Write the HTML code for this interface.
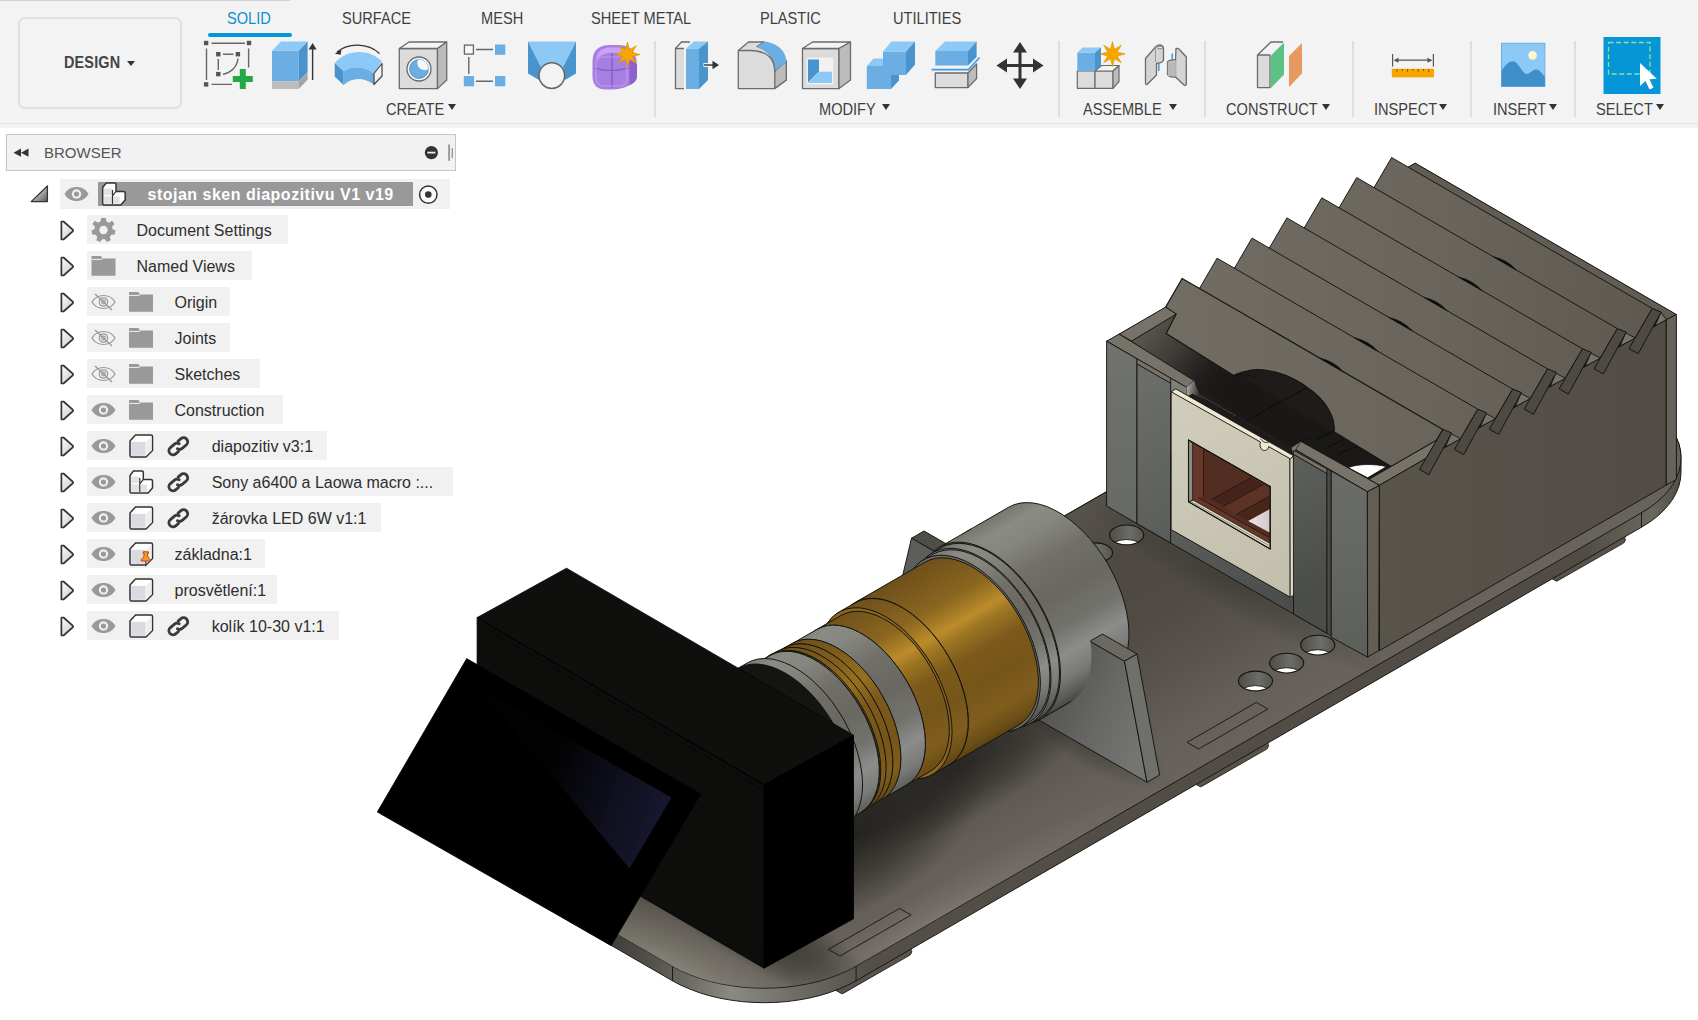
<!DOCTYPE html>
<html lang="cs">
<head>
<meta charset="utf-8">
<title>stojan sken diapozitivu V1 v19</title>
<style>
html,body{margin:0;padding:0;}
body{width:1698px;height:1020px;overflow:hidden;background:#fff;position:relative;font-family:"Liberation Sans",sans-serif;color:#3a3a3a;}
#toolbar{position:absolute;left:0;top:0;width:1698px;height:128px;background:#f3f3f3;}
#toolbar .bline{position:absolute;left:0;top:123px;width:1698px;height:1px;background:#e3e3e3;}
#toolbar .topline{position:absolute;left:0;top:0;width:290px;height:1px;background:#d2d2d2;}
.tab{position:absolute;top:9px;font-size:16.5px;line-height:18px;color:#3e3e3e;white-space:nowrap;transform:scaleX(.885);transform-origin:0 0;}
.tab.act{color:#0a8fd0;}
.uline{position:absolute;left:208px;top:33px;width:84px;height:4px;background:#0696d7;border-radius:2px;}
#design{position:absolute;left:18px;top:17px;width:160px;height:88px;border:2px solid #e0e0e0;border-radius:7px;}
#design span{position:absolute;left:43.5px;top:35px;font-size:16px;line-height:18px;font-weight:bold;color:#444;letter-spacing:0.2px;transform:scaleX(.9);transform-origin:0 0;}
.lbl{position:absolute;top:100px;font-size:16.5px;line-height:18px;color:#3e3e3e;white-space:nowrap;transform:scaleX(.885);transform-origin:0 0;}
.arr{position:absolute;width:0;height:0;border-left:4.5px solid transparent;border-right:4.5px solid transparent;border-top:6px solid #333;}
.sep{position:absolute;top:41px;width:2px;height:76px;background:#dedede;}
#icons{position:absolute;left:0;top:0;}
#browser{position:absolute;left:0;top:128px;width:470px;height:540px;}
#bhead{position:absolute;left:6px;top:6px;width:448px;height:35px;background:#f2f2f2;border:1px solid #c6c6c6;}
#bhead span{position:absolute;left:37px;top:9px;font-size:15px;line-height:18px;color:#555;}
.row{position:absolute;height:30px;background:#f1f1f1;}
.row .t{position:absolute;top:6px;font-size:15px;line-height:18px;color:#2e2e2e;white-space:nowrap;}
.tt{position:absolute;font-size:16px;line-height:18px;color:#2e2e2e;white-space:nowrap;}
#tree{position:absolute;left:0;top:0;}
#model{position:absolute;left:0;top:0;}
</style>
</head>
<body>

<svg id="model" width="1698" height="1020" viewBox="0 0 1698 1020">
<defs>
<linearGradient id="gTop" gradientUnits="userSpaceOnUse" x1="1193.8" y1="771.2" x2="1050.9" y2="523.7"><stop offset="0" stop-color="#68635c"/><stop offset="0.15" stop-color="#645f58"/><stop offset="0.35" stop-color="#58544d"/><stop offset="0.55" stop-color="#4f4b44"/><stop offset="0.8" stop-color="#4e4a43"/><stop offset="1" stop-color="#57534c"/></linearGradient>
<linearGradient id="gSide" gradientUnits="userSpaceOnUse" x1="600" y1="0" x2="1690" y2="0">
<stop offset="0" stop-color="#3a3833"/><stop offset="0.05" stop-color="#55534c"/><stop offset="0.12" stop-color="#8a8a82"/><stop offset="0.19" stop-color="#6a675f"/><stop offset="0.25" stop-color="#534f48"/><stop offset="0.9" stop-color="#504c45"/><stop offset="0.965" stop-color="#6a675f"/><stop offset="1" stop-color="#4a4740"/></linearGradient>
<linearGradient id="gHole" x1="0" y1="0" x2="1" y2="0"><stop offset="0" stop-color="#4d4c47"/><stop offset="0.6" stop-color="#6d6d67"/><stop offset="1" stop-color="#55544f"/></linearGradient>
<radialGradient id="shCam" cx="0.5" cy="0.5" r="0.5"><stop offset="0" stop-color="#1c1b18" stop-opacity="0.85"/><stop offset="0.55" stop-color="#1c1b18" stop-opacity="0.45"/><stop offset="1" stop-color="#1c1b18" stop-opacity="0"/></radialGradient>
<clipPath id="cTop"><polygon points="672.5,966.2 680.8,970.7 689.8,974.6 699.4,978.2 709.4,981.2 719.9,983.7 730.7,985.6 741.7,987.1 752.9,987.9 764.3,988.2 775.6,987.9 786.8,987.1 797.9,985.6 808.7,983.7 819.1,981.2 829.2,978.2 838.7,974.6 847.7,970.7 856.1,966.2 1641.5,512.8 1649.5,507.7 1656.6,502.4 1663.0,496.6 1668.4,490.6 1672.9,484.4 1676.4,477.9 1679.0,471.3 1680.5,464.5 1681.0,457.8 1680.5,451.0 1679.0,444.2 1676.4,437.6 1672.9,431.1 1668.4,424.9 1663.0,418.9 1656.6,413.1 1649.5,407.8 1641.5,402.8 1546.3,347.8 1537.6,343.2 1528.3,339.0 1518.4,335.4 1508.0,332.3 1497.1,329.7 1485.9,327.6 1474.4,326.1 1462.8,325.3 1451.0,325.0 1439.3,325.3 1427.6,326.1 1416.2,327.6 1404.9,329.7 1394.1,332.3 1383.7,335.4 1373.7,339.0 1364.4,343.2 1355.8,347.8 570.3,801.2 562.6,806.1 555.7,811.3 549.6,816.8 544.4,822.6 540.1,828.6 536.7,834.9 534.2,841.2 532.7,847.7 532.3,854.2 532.7,860.8 534.2,867.3 536.7,873.6 540.1,879.9 544.4,885.9 549.6,891.7 555.7,897.2 562.6,902.4 570.3,907.2"/></clipPath>
<radialGradient id="hiL" cx="0.5" cy="0.5" r="0.5"><stop offset="0" stop-color="#b5b2a8" stop-opacity="0.75"/><stop offset="0.5" stop-color="#a09d94" stop-opacity="0.4"/><stop offset="1" stop-color="#a09d94" stop-opacity="0"/></radialGradient>
<linearGradient id="gFin" gradientUnits="userSpaceOnUse" x1="1170" y1="300" x2="1660" y2="330"><stop offset="0" stop-color="#716d64"/><stop offset="0.55" stop-color="#69655c"/><stop offset="1" stop-color="#5d5951"/></linearGradient>
<linearGradient id="gWall" gradientUnits="userSpaceOnUse" x1="1380" y1="480" x2="1670" y2="480"><stop offset="0" stop-color="#58544c"/><stop offset="1" stop-color="#514d46"/></linearGradient>
<linearGradient id="gPilO" gradientUnits="userSpaceOnUse" x1="0" y1="340" x2="0" y2="660"><stop offset="0" stop-color="#70726f"/><stop offset="0.6" stop-color="#676966"/><stop offset="1" stop-color="#5c5e5a"/></linearGradient>
<linearGradient id="gPilI" gradientUnits="userSpaceOnUse" x1="1137" y1="380" x2="1250" y2="620"><stop offset="0" stop-color="#6b6d6a"/><stop offset="0.5" stop-color="#5e605d"/><stop offset="1" stop-color="#4b4d4a"/></linearGradient>
<linearGradient id="gCav" gradientUnits="userSpaceOnUse" x1="1140" y1="325" x2="1222" y2="392"><stop offset="0" stop-color="#5d5a52"/><stop offset="0.45" stop-color="#3b3935"/><stop offset="1" stop-color="#1d1c1a" stop-opacity="0"/></linearGradient>
<linearGradient id="gSlide" gradientUnits="userSpaceOnUse" x1="1175" y1="400" x2="1290" y2="600"><stop offset="0" stop-color="#d0cdba"/><stop offset="1" stop-color="#c1beab"/></linearGradient>
<linearGradient id="gFil" gradientUnits="userSpaceOnUse" x1="1187" y1="390" x2="1200" y2="392"><stop offset="0" stop-color="#a2a29e"/><stop offset="1" stop-color="#2b2a28"/></linearGradient>
<linearGradient id="gPink" gradientUnits="userSpaceOnUse" x1="1248" y1="521" x2="1270" y2="521"><stop offset="0" stop-color="#ece4e4"/><stop offset="1" stop-color="#d3c8ca"/></linearGradient>
<linearGradient id="gGray" gradientUnits="userSpaceOnUse" x1="880.2" y1="581.4" x2="979.8" y2="754.1"><stop offset="0" stop-color="#77766f"/><stop offset="0.08" stop-color="#8b8b86"/><stop offset="0.17" stop-color="#868680"/><stop offset="0.32" stop-color="#716f69"/><stop offset="0.5" stop-color="#696761"/><stop offset="0.66" stop-color="#73736e"/><stop offset="0.78" stop-color="#8c8d8a"/><stop offset="0.88" stop-color="#7a7b78"/><stop offset="0.96" stop-color="#5c5b57"/><stop offset="1" stop-color="#4a4945"/></linearGradient>
<linearGradient id="gGold" gradientUnits="userSpaceOnUse" x1="880.2" y1="581.4" x2="979.8" y2="754.1"><stop offset="0" stop-color="#6b4d1a"/><stop offset="0.12" stop-color="#7a591d"/><stop offset="0.25" stop-color="#8a661f"/><stop offset="0.32" stop-color="#a67b26"/><stop offset="0.375" stop-color="#bb8c2c"/><stop offset="0.44" stop-color="#9c7422"/><stop offset="0.55" stop-color="#7c5a1b"/><stop offset="0.7" stop-color="#76551a"/><stop offset="0.85" stop-color="#7f5e1d"/><stop offset="0.94" stop-color="#6a4d17"/><stop offset="1" stop-color="#4e3810"/></linearGradient>
<linearGradient id="gGoldD" gradientUnits="userSpaceOnUse" x1="880.2" y1="581.4" x2="979.8" y2="754.1"><stop offset="0" stop-color="#6b4d1a"/><stop offset="0.2" stop-color="#7c5b1d"/><stop offset="0.375" stop-color="#94701f"/><stop offset="0.5" stop-color="#7c5a1b"/><stop offset="0.7" stop-color="#76551a"/><stop offset="0.85" stop-color="#7f5e1d"/><stop offset="0.94" stop-color="#6a4d17"/><stop offset="1" stop-color="#4e3810"/></linearGradient>
<linearGradient id="gGus" gradientUnits="userSpaceOnUse" x1="1050" y1="705" x2="1140" y2="745"><stop offset="0" stop-color="#555653"/><stop offset="0.5" stop-color="#676865"/><stop offset="1" stop-color="#747572"/></linearGradient>
<linearGradient id="gScr" gradientUnits="userSpaceOnUse" x1="700" y1="790" x2="560" y2="740"><stop offset="0" stop-color="#1a1a38"/><stop offset="0.5" stop-color="#10101f"/><stop offset="1" stop-color="#020203"/></linearGradient>
</defs>
<polygon points="842.2,969.8 908.9,931.2 908.9,952.2 842.2,990.8 830.1,983.8 830.1,962.8" fill="#58544c" stroke="#58544c" stroke-width="6" stroke-linejoin="round"/>
<polyline points="827.1,962.8 827.9,986.0 842.2,993.8 909.9,955.2 911.9,951.2" fill="none" stroke="#2a2824" stroke-width="0.9" stroke-linejoin="round" stroke-linecap="round" />
<polygon points="1200.7,762.8 1265.7,725.2 1265.7,746.2 1200.7,783.8 1188.6,776.8 1188.6,755.8" fill="#58544c" stroke="#58544c" stroke-width="6" stroke-linejoin="round"/>
<polyline points="1185.6,755.8 1186.4,779.0 1200.7,786.8 1266.7,749.2 1268.7,745.2" fill="none" stroke="#2a2824" stroke-width="0.9" stroke-linejoin="round" stroke-linecap="round" />
<polygon points="1556.7,557.2 1622.5,519.2 1622.5,540.2 1556.7,578.2 1544.6,571.2 1544.6,550.2" fill="#58544c" stroke="#58544c" stroke-width="6" stroke-linejoin="round"/>
<polyline points="1541.6,550.2 1542.4,573.5 1556.7,581.2 1623.5,543.2 1625.5,539.2" fill="none" stroke="#2a2824" stroke-width="0.9" stroke-linejoin="round" stroke-linecap="round" />
<polygon points="532.3,868.8 532.7,875.3 534.2,881.8 536.7,888.1 540.1,894.4 544.4,900.4 549.6,906.2 555.7,911.7 562.6,916.9 570.3,921.8 672.5,980.8 680.8,985.2 689.8,989.1 699.4,992.7 709.4,995.7 719.9,998.2 730.7,1000.1 741.7,1001.6 752.9,1002.4 764.3,1002.7 775.6,1002.4 786.8,1001.6 797.9,1000.1 808.7,998.2 819.1,995.7 829.2,992.7 838.7,989.1 847.7,985.2 856.1,980.8 1641.5,527.2 1649.5,522.2 1656.6,516.9 1663.0,511.1 1668.4,505.1 1672.9,498.9 1676.4,492.4 1679.0,485.8 1680.5,479.0 1681.0,472.2 1681.0,457.8 1680.5,451.0 1679.0,444.2 1676.4,437.6 1672.9,431.1 1668.4,424.9 1663.0,418.9 1656.6,413.1 1649.5,407.8 1641.5,402.8 1546.3,347.8 1537.6,343.2 1528.3,339.0 1518.4,335.4 1508.0,332.3 1497.1,329.7 1485.9,327.6 1474.4,326.1 1462.8,325.3 1451.0,325.0 1439.3,325.3 1427.6,326.1 1416.2,327.6 1404.9,329.7 1394.1,332.3 1383.7,335.4 1373.7,339.0 1364.4,343.2 1355.8,347.8 570.3,801.2 562.6,806.1 555.7,811.3 549.6,816.8 544.4,822.6 540.1,828.6 536.7,834.9 534.2,841.2 532.7,847.7 532.3,854.2" fill="url(#gSide)" stroke="#15140f" stroke-width="0.95" stroke-linejoin="round" />
<polygon points="672.5,966.2 680.8,970.7 689.8,974.6 699.4,978.2 709.4,981.2 719.9,983.7 730.7,985.6 741.7,987.1 752.9,987.9 764.3,988.2 775.6,987.9 786.8,987.1 797.9,985.6 808.7,983.7 819.1,981.2 829.2,978.2 838.7,974.6 847.7,970.7 856.1,966.2 1641.5,512.8 1649.5,507.7 1656.6,502.4 1663.0,496.6 1668.4,490.6 1672.9,484.4 1676.4,477.9 1679.0,471.3 1680.5,464.5 1681.0,457.8 1680.5,451.0 1679.0,444.2 1676.4,437.6 1672.9,431.1 1668.4,424.9 1663.0,418.9 1656.6,413.1 1649.5,407.8 1641.5,402.8 1546.3,347.8 1537.6,343.2 1528.3,339.0 1518.4,335.4 1508.0,332.3 1497.1,329.7 1485.9,327.6 1474.4,326.1 1462.8,325.3 1451.0,325.0 1439.3,325.3 1427.6,326.1 1416.2,327.6 1404.9,329.7 1394.1,332.3 1383.7,335.4 1373.7,339.0 1364.4,343.2 1355.8,347.8 570.3,801.2 562.6,806.1 555.7,811.3 549.6,816.8 544.4,822.6 540.1,828.6 536.7,834.9 534.2,841.2 532.7,847.7 532.3,854.2 532.7,860.8 534.2,867.3 536.7,873.6 540.1,879.9 544.4,885.9 549.6,891.7 555.7,897.2 562.6,902.4 570.3,907.2" fill="url(#gTop)" stroke="#15140f" stroke-width="0.95" stroke-linejoin="round" />
<polyline points="856.1,966.2 856.1,980.8" fill="none" stroke="#15140f" stroke-width="0.9" stroke-linejoin="round" stroke-linecap="round" />
<polyline points="672.5,966.2 672.5,980.8" fill="none" stroke="#15140f" stroke-width="0.9" stroke-linejoin="round" stroke-linecap="round" />
<polyline points="1641.5,512.8 1641.5,527.2" fill="none" stroke="#15140f" stroke-width="0.9" stroke-linejoin="round" stroke-linecap="round" />
<g clip-path="url(#cTop)">
<ellipse cx="660" cy="985" rx="210" ry="80" transform="rotate(28 660 985)" fill="url(#hiL)"/>
<ellipse cx="930" cy="925" rx="260" ry="34" transform="rotate(-30 930 925)" fill="url(#hiL)" opacity="0.35"/>
<ellipse cx="850" cy="835" rx="150" ry="75" transform="rotate(-30 850 835)" fill="url(#shCam)"/>
<ellipse cx="960" cy="765" rx="150" ry="55" transform="rotate(-30 960 765)" fill="url(#shCam)" opacity="0.9"/>
<ellipse cx="760" cy="930" rx="140" ry="38" transform="rotate(30 760 930)" fill="url(#shCam)" opacity="0.7"/>
<ellipse cx="1095" cy="740" rx="80" ry="30" transform="rotate(30 1095 740)" fill="url(#shCam)" opacity="0.45"/>
<ellipse cx="1235" cy="585" rx="190" ry="26" transform="rotate(30 1235 585)" fill="url(#shCam)" opacity="0.3"/>
</g>
<polygon points="840.0,956.0 911.1,915.0 899.5,908.4 828.5,949.4" fill="none" stroke="#15140f" stroke-width="0.9" stroke-linejoin="round" />
<polygon points="1198.6,749.0 1267.9,709.0 1256.3,702.4 1187.1,742.4" fill="none" stroke="#15140f" stroke-width="0.9" stroke-linejoin="round" />
<clipPath id="hc697_54"><ellipse cx="1317.7" cy="645.1" rx="17.1" ry="9.9"/></clipPath>
<ellipse cx="1317.7" cy="645.1" rx="17.1" ry="9.9" fill="url(#gHole)"/>
<ellipse cx="1317.7" cy="659.6" rx="17.1" ry="9.9" fill="#fff" stroke="#15140f" stroke-width="0.9" clip-path="url(#hc697_54)"/>
<ellipse cx="1317.7" cy="645.1" rx="17.1" ry="9.9" fill="none" stroke="#15140f" stroke-width="1.1"/>
<clipPath id="hc661_54"><ellipse cx="1286.6" cy="663.1" rx="17.1" ry="9.9"/></clipPath>
<ellipse cx="1286.6" cy="663.1" rx="17.1" ry="9.9" fill="url(#gHole)"/>
<ellipse cx="1286.6" cy="677.6" rx="17.1" ry="9.9" fill="#fff" stroke="#15140f" stroke-width="0.9" clip-path="url(#hc661_54)"/>
<ellipse cx="1286.6" cy="663.1" rx="17.1" ry="9.9" fill="none" stroke="#15140f" stroke-width="1.1"/>
<clipPath id="hc625_54"><ellipse cx="1255.5" cy="681.0" rx="17.1" ry="9.9"/></clipPath>
<ellipse cx="1255.5" cy="681.0" rx="17.1" ry="9.9" fill="url(#gHole)"/>
<ellipse cx="1255.5" cy="695.5" rx="17.1" ry="9.9" fill="#fff" stroke="#15140f" stroke-width="0.9" clip-path="url(#hc625_54)"/>
<ellipse cx="1255.5" cy="681.0" rx="17.1" ry="9.9" fill="none" stroke="#15140f" stroke-width="1.1"/>
<clipPath id="hc697_275"><ellipse cx="1126.6" cy="534.9" rx="17.1" ry="9.9"/></clipPath>
<ellipse cx="1126.6" cy="534.9" rx="17.1" ry="9.9" fill="url(#gHole)"/>
<ellipse cx="1126.6" cy="549.4" rx="17.1" ry="9.9" fill="#fff" stroke="#15140f" stroke-width="0.9" clip-path="url(#hc697_275)"/>
<ellipse cx="1126.6" cy="534.9" rx="17.1" ry="9.9" fill="none" stroke="#15140f" stroke-width="1.1"/>
<clipPath id="hc661_275"><ellipse cx="1095.5" cy="552.8" rx="17.1" ry="9.9"/></clipPath>
<ellipse cx="1095.5" cy="552.8" rx="17.1" ry="9.9" fill="url(#gHole)"/>
<ellipse cx="1095.5" cy="567.3" rx="17.1" ry="9.9" fill="#fff" stroke="#15140f" stroke-width="0.9" clip-path="url(#hc661_275)"/>
<ellipse cx="1095.5" cy="552.8" rx="17.1" ry="9.9" fill="none" stroke="#15140f" stroke-width="1.1"/>
<polygon points="1106.6,341.2 1367.3,491.7 1379.4,485.3 1676.4,314.5 1415.2,163.1" fill="#1d1c1a" stroke="none" stroke-width="0.95" stroke-linejoin="round" />
<polygon points="1415.2,163.1 1676.4,314.5 1666.3,319.7 1404.8,169.1" fill="#615d55" stroke="#15140f" stroke-width="0.95" stroke-linejoin="round" />
<path d="M1196 384 C1215 392 1222 405 1246 421 L1290 447 L1300 441 L1334 432 L1300 413 L1236 372 L1190 346 Z" fill="#191817"/>
<path d="M1246 421 L1306 388 M1300 441 L1334 432" stroke="#0c0c0b" stroke-width="1" fill="none"/>
<path d="M1300 441 L1369 479.3 L1391.2 466.5 L1334 431.8 Z" fill="#1a1918"/>
<path d="M1316 440 L1340 428 M1328 447 L1350 436 M1338 455 C1350 447 1362 446 1372 446" stroke="#0b0b0a" stroke-width="1" fill="none"/>
<polygon points="1131.7,341.1 1176.2,314.1 1166.2,333.5 1240.0,376.0 1232.0,408.0 1186.0,378.0" fill="url(#gCav)" stroke="none" stroke-width="0.95" stroke-linejoin="round" />
<path d="M1348.2 467.6 C1358 463.8 1374 463.6 1386.5 466.6 L1367.6 477.8 Z" fill="#ffffff" stroke="#15140f" stroke-width="0.8"/>
<polygon points="1391.6,157.5 1652.3,308.5 1628.9,348.6 1368.2,197.6" fill="url(#gFin)" stroke="#15140f" stroke-width="0.95" stroke-linejoin="round" />
<polygon points="1356.7,177.6 1617.4,328.6 1594.0,368.8 1333.3,217.7" fill="url(#gFin)" stroke="#15140f" stroke-width="0.95" stroke-linejoin="round" />
<polygon points="1321.8,197.8 1582.5,348.8 1559.1,388.9 1298.4,237.9" fill="url(#gFin)" stroke="#15140f" stroke-width="0.95" stroke-linejoin="round" />
<polygon points="1286.9,217.9 1547.6,368.9 1524.2,409.1 1263.5,258.1" fill="url(#gFin)" stroke="#15140f" stroke-width="0.95" stroke-linejoin="round" />
<polygon points="1252.0,238.1 1512.7,389.1 1489.3,429.2 1228.6,278.2" fill="url(#gFin)" stroke="#15140f" stroke-width="0.95" stroke-linejoin="round" />
<polygon points="1217.1,258.2 1477.8,409.2 1454.4,449.4 1193.7,298.4" fill="url(#gFin)" stroke="#15140f" stroke-width="0.95" stroke-linejoin="round" />
<path d="M1182.2 278.4 L1442.9 429.4 L1426 458.4 L1437.6 439.7 L1391.2 466.5 L1334 431.8 C1336 418 1326 400 1308 388 C1290 374 1262 366 1247 371 C1240 372.5 1236 374 1233.7 375.5 L1166.2 333.5 L1176.2 314.1 L1165.6 307.1 Z" fill="url(#gFin)" stroke="#15140f" stroke-width="1.1" stroke-linejoin="round"/>
<path d="M1234 375.5 C1244 372 1250 376 1256 378" stroke="#15140f" stroke-width="1" fill="none"/>
<path d="M1319.8 358.1 Q1333.7 361.1 1343.2 371.7 Z" fill="#0d0d0c" stroke="#0d0d0c" stroke-width="0.6"/>
<path d="M1354.5 337.8 Q1368.4 340.8 1377.9 351.4 Z" fill="#0d0d0c" stroke="#0d0d0c" stroke-width="0.6"/>
<path d="M1389.2 317.5 Q1403.1 320.5 1412.6 331.1 Z" fill="#0d0d0c" stroke="#0d0d0c" stroke-width="0.6"/>
<path d="M1423.9 297.3 Q1437.8 300.3 1447.3 310.9 Z" fill="#0d0d0c" stroke="#0d0d0c" stroke-width="0.6"/>
<path d="M1458.6 277.0 Q1472.5 280.0 1482.0 290.6 Z" fill="#0d0d0c" stroke="#0d0d0c" stroke-width="0.6"/>
<path d="M1493.3 256.7 Q1507.2 259.7 1516.7 270.3 Z" fill="#0d0d0c" stroke="#0d0d0c" stroke-width="0.6"/>
<polygon points="1379.4,485.3 1369.0,479.3 1437.6,439.7 1426.0,458.4" fill="#77736a" stroke="#15140f" stroke-width="0.95" stroke-linejoin="round" />
<polygon points="1379.4,485.3 1666.3,319.7 1666.3,485.1 1379.4,650.7" fill="url(#gWall)" stroke="#15140f" stroke-width="0.95" stroke-linejoin="round" />
<polygon points="1661.0,312.0 1661.0,312.5 1666.3,319.7 1655.0,326.0" fill="#77736a" stroke="#15140f" stroke-width="0.9" stroke-linejoin="round" />
<polygon points="1367.3,491.7 1379.4,485.3 1378.8,650.6 1367.6,657.1" fill="#625e56" stroke="#15140f" stroke-width="0.95" stroke-linejoin="round" />
<polygon points="1666.3,319.7 1676.4,314.5 1676.4,479.4 1666.3,485.1" fill="#67635b" stroke="#15140f" stroke-width="0.95" stroke-linejoin="round" />
<polygon points="1451.1,433.7 1460.7,438.8 1445.6,446.9" fill="#77736a" stroke="#15140f" stroke-width="0.9" stroke-linejoin="round" />
<polygon points="1442.9,429.4 1451.7,432.9 1428.8,474.7 1419.5,469.5" fill="#4e4a43" stroke="#15140f" stroke-width="1.0" stroke-linejoin="round" />
<polygon points="1486.0,413.6 1495.6,418.6 1480.5,426.8" fill="#77736a" stroke="#15140f" stroke-width="0.9" stroke-linejoin="round" />
<polygon points="1477.8,409.2 1486.6,412.8 1463.7,454.6 1454.4,449.4" fill="#4e4a43" stroke="#15140f" stroke-width="1.0" stroke-linejoin="round" />
<polygon points="1520.9,393.4 1530.5,398.5 1515.4,406.6" fill="#77736a" stroke="#15140f" stroke-width="0.9" stroke-linejoin="round" />
<polygon points="1512.7,389.1 1521.5,392.6 1498.6,434.4 1489.3,429.2" fill="#4e4a43" stroke="#15140f" stroke-width="1.0" stroke-linejoin="round" />
<polygon points="1555.8,373.2 1565.4,378.3 1550.3,386.4" fill="#77736a" stroke="#15140f" stroke-width="0.9" stroke-linejoin="round" />
<polygon points="1547.6,368.9 1556.4,372.4 1533.5,414.2 1524.2,409.1" fill="#4e4a43" stroke="#15140f" stroke-width="1.0" stroke-linejoin="round" />
<polygon points="1590.7,353.1 1600.3,358.2 1585.2,366.3" fill="#77736a" stroke="#15140f" stroke-width="0.9" stroke-linejoin="round" />
<polygon points="1582.5,348.8 1591.3,352.3 1568.4,394.1 1559.1,388.9" fill="#4e4a43" stroke="#15140f" stroke-width="1.0" stroke-linejoin="round" />
<polygon points="1625.6,332.9 1635.2,338.0 1620.1,346.1" fill="#77736a" stroke="#15140f" stroke-width="0.9" stroke-linejoin="round" />
<polygon points="1617.4,328.6 1626.2,332.1 1603.3,373.9 1594.0,368.8" fill="#4e4a43" stroke="#15140f" stroke-width="1.0" stroke-linejoin="round" />
<polygon points="1652.3,308.5 1661.1,312.0 1638.2,353.8 1628.9,348.6" fill="#4e4a43" stroke="#15140f" stroke-width="1.0" stroke-linejoin="round" />
<polygon points="1106.6,341.2 1119.3,334.0 1194.1,380.6 1186.5,387.3" fill="#77736a" stroke="#15140f" stroke-width="0.95" stroke-linejoin="round" />
<polygon points="1119.3,334.0 1165.6,307.1 1176.2,314.1 1131.7,341.1" fill="#77736a" stroke="#15140f" stroke-width="0.95" stroke-linejoin="round" />
<polygon points="1186.5,387.3 1194.1,380.6 1192.0,392.0 1185.0,396.0" fill="#8a8a84" stroke="#15140f" stroke-width="0.8" stroke-linejoin="round" />
<polygon points="1291.2,447.0 1300.6,441.2 1379.4,485.3 1367.3,491.7" fill="#77736a" stroke="#15140f" stroke-width="0.95" stroke-linejoin="round" />
<polygon points="1106.6,341.2 1137.0,358.8 1137.0,523.6 1106.6,506.0" fill="url(#gPilO)" stroke="#15140f" stroke-width="0.95" stroke-linejoin="round" />
<polygon points="1170.6,525.0 1293.5,596.0 1293.5,613.9 1170.6,543.0" fill="url(#gPilI)" stroke="none" stroke-width="0.95" stroke-linejoin="round" />
<polyline points="1137.0,523.6 1327.0,633.3" fill="none" stroke="#15140f" stroke-width="0.95" stroke-linejoin="round" stroke-linecap="round" />
<polygon points="1137.0,363.8 1170.6,383.2 1170.6,543.0 1137.0,523.6" fill="url(#gPilI)" stroke="#15140f" stroke-width="0.95" stroke-linejoin="round" />
<polygon points="1293.5,454.2 1327.0,473.5 1327.0,633.3 1293.5,613.9" fill="url(#gPilI)" stroke="#15140f" stroke-width="0.95" stroke-linejoin="round" />
<polygon points="1186.5,387.3 1291.2,447.8 1293.4,457.0 1175.6,389.5" fill="#1d1c1a" stroke="none" stroke-width="0.95" stroke-linejoin="round" />
<polygon points="1170.6,378.2 1186.5,387.3 1186.5,397.0 1176.0,391.0 1170.6,392.0" fill="#7d7f7c" stroke="#15140f" stroke-width="0.8" stroke-linejoin="round" />
<path d="M1186.5 387.3 L1194.1 380.6 C1196 388 1199 394 1204 400 L1192.5 393.5 L1186.5 397 Z" fill="url(#gFil)"/>
<path d="M1291.2 447.8 L1293.4 446.4 L1300.6 441.2 L1296 449 L1293.4 456 Z" fill="#7d7f7c" stroke="#15140f" stroke-width="0.7"/>
<polygon points="1137.0,358.8 1170.6,378.2 1170.6,383.2 1137.0,363.8" fill="#77736a" stroke="#15140f" stroke-width="0.8" stroke-linejoin="round" />
<polygon points="1293.5,450.3 1327.0,469.1 1327.0,473.5 1293.5,454.2" fill="#77736a" stroke="#15140f" stroke-width="0.8" stroke-linejoin="round" />
<polygon points="1327.0,468.5 1331.2,470.9 1331.2,635.7 1327.0,633.3" fill="#4a4b48" stroke="#15140f" stroke-width="0.8" stroke-linejoin="round" />
<polygon points="1331.2,470.9 1367.3,491.7 1367.6,657.1 1331.2,637.2" fill="url(#gPilO)" stroke="#15140f" stroke-width="0.95" stroke-linejoin="round" />
<polygon points="1171.2,391.2 1290.0,458.2 1290.2,597.2 1171.1,529.6" fill="url(#gSlide)" stroke="#15140f" stroke-width="0.95" stroke-linejoin="round" />
<polygon points="1290.0,458.2 1293.3,456.6 1293.5,595.2 1290.2,597.2" fill="#dedac6" stroke="#15140f" stroke-width="0.8" stroke-linejoin="round" />
<path d="M1171.2 391.8 L1175.8 388.9 L1293.3 455.6 L1290.6 459 L1268.6 446.6 C1268.4 449.6 1265.4 451.4 1262.6 450 C1260 448.6 1259.6 445 1260.4 442 Z" fill="#ece8d4" stroke="#15140f" stroke-width="0.9" stroke-linejoin="round"/>
<path d="M1260.6 438.6 C1262 441.5 1265.5 443.4 1268.8 442.2" fill="none" stroke="#15140f" stroke-width="0.8"/>
<polygon points="1188.5,439.9 1270.2,486.6 1270.2,549.0 1188.5,501.7" fill="#522d22" stroke="#15140f" stroke-width="0.95" stroke-linejoin="round" />
<polygon points="1192.6,443.3 1203.6,449.6 1203.6,497.0 1192.6,500.3" fill="#65382a" stroke="none" stroke-width="0.95" stroke-linejoin="round" />
<polyline points="1203.6,449.6 1203.6,497.0" fill="none" stroke="#2e150e" stroke-width="0.9" stroke-linejoin="round" stroke-linecap="round" />
<polygon points="1211.2,499.6 1251.0,477.7 1263.4,484.5 1223.5,506.5" fill="#44241a" stroke="none" stroke-width="0.95" stroke-linejoin="round" />
<polygon points="1223.5,506.5 1263.4,484.5 1269.5,488.0 1269.5,496.2 1235.9,514.7" fill="#5c3327" stroke="none" stroke-width="0.95" stroke-linejoin="round" />
<polygon points="1235.9,514.7 1269.5,496.2 1269.5,509.2 1248.2,520.9" fill="#472619" stroke="none" stroke-width="0.95" stroke-linejoin="round" />
<polygon points="1193.3,500.3 1198.0,497.5 1269.5,537.8 1269.5,543.2" fill="#643729" stroke="none" stroke-width="0.95" stroke-linejoin="round" />
<path d="M1211.2 499.6 L1251 477.7 M1223.5 506.5 L1263.4 484.5 M1235.9 514.7 L1269.5 496.2 M1198 497.5 L1269.5 537.8" stroke="#2e150e" stroke-width="0.9" fill="none"/>
<polygon points="1248.2,520.9 1269.5,509.2 1269.5,532.6" fill="url(#gPink)" stroke="none" stroke-width="0.95" stroke-linejoin="round" />
<polygon points="1188.5,439.9 1192.6,443.3 1192.6,500.3 1188.5,501.7" fill="#8c8c84" stroke="#15140f" stroke-width="0.7" stroke-linejoin="round" />
<polygon points="1188.5,501.7 1193.3,500.3 1270.2,543.5 1270.2,549.0" fill="#dedbc8" stroke="#15140f" stroke-width="0.7" stroke-linejoin="round" />
<polyline points="1190.5,501.2 1270.2,546.2" fill="none" stroke="#55534a" stroke-width="0.6" stroke-linejoin="round" stroke-linecap="round" />
<polygon points="1188.5,439.9 1270.2,486.6 1270.2,549.0 1188.5,501.7" fill="none" stroke="#15140f" stroke-width="1.1" stroke-linejoin="round" />
<polygon points="911.5,538.2 924.0,531.0 958.7,551.0 946.1,558.2" fill="#4f4d48" stroke="#15140f" stroke-width="0.95" stroke-linejoin="round" />
<polygon points="911.5,538.2 946.1,558.2 946.1,606.2 901.1,620.2 889.0,633.2" fill="#5d5e5b" stroke="#15140f" stroke-width="0.95" stroke-linejoin="round" />
<polygon points="968.2,530.6 963.2,534.1 958.9,538.5 955.2,543.7 952.2,549.8 949.9,556.6 948.4,564.0 947.6,572.0 947.6,580.6 948.4,589.5 949.9,598.7 952.2,608.1 955.2,617.6 958.9,627.1 963.2,636.5 968.2,645.7 973.6,654.6 979.6,663.1 986.0,671.0 992.7,678.4 999.8,685.0 1007.0,691.0 1014.3,696.1 1021.7,700.4 1029.0,703.7 1036.3,706.1 1043.3,707.5 1050.0,708.0 1056.4,707.4 1062.4,705.8 1067.9,703.3 1108.3,679.9 1113.3,676.4 1117.6,672.0 1121.3,666.8 1124.3,660.7 1126.6,654.0 1128.1,646.5 1128.9,638.5 1128.9,630.0 1128.1,621.0 1126.6,611.8 1124.3,602.4 1121.3,592.9 1117.6,583.4 1113.3,574.0 1108.3,564.8 1102.9,555.9 1096.9,547.5 1090.5,539.5 1083.8,532.2 1076.7,525.5 1069.5,519.5 1062.2,514.4 1054.8,510.2 1047.5,506.8 1040.3,504.4 1033.2,503.0 1026.5,502.6 1020.1,503.1 1014.1,504.7 1008.7,507.2" fill="url(#gGray)" stroke="#15140f" stroke-width="1.0" stroke-linejoin="round" />
<polygon points="1089.9,641.2 1124.5,661.2 1147.0,782.2 1040.5,721.0 1038.5,720.0 1067.9,703.3 1071.0,701.2 1073.9,698.8 1076.6,696.1 1079.0,693.0 1081.1,689.6 1083.0,685.9 1084.7,681.9 1086.0,677.7 1087.1,673.2 1087.8,668.4 1088.3,663.4 1088.5,658.3 1088.4,652.9 1088.0,647.4" fill="url(#gGus)" stroke="#15140f" stroke-width="0.95" stroke-linejoin="round" />
<polygon points="1089.9,641.2 1102.4,634.0 1137.1,654.0 1124.5,661.2" fill="#6b6962" stroke="#15140f" stroke-width="0.95" stroke-linejoin="round" />
<polygon points="1124.5,661.2 1137.1,654.0 1159.6,775.0 1147.0,782.2" fill="#6f706c" stroke="#15140f" stroke-width="0.95" stroke-linejoin="round" />
<polygon points="940.2,546.8 935.2,550.3 930.9,554.7 927.2,559.9 924.2,566.0 921.9,572.7 920.4,580.2 919.6,588.2 919.6,596.7 920.4,605.7 921.9,614.9 924.2,624.3 927.2,633.8 930.9,643.3 935.2,652.7 940.2,661.9 945.6,670.8 951.6,679.2 958.0,687.2 964.7,694.5 971.8,701.2 979.0,707.2 986.3,712.3 993.7,716.5 1001.0,719.9 1008.2,722.3 1015.3,723.7 1022.0,724.1 1028.4,723.6 1034.4,722.0 1039.8,719.5 1070.9,701.6 1075.8,698.1 1080.1,693.7 1083.8,688.4 1086.8,682.4 1089.1,675.6 1090.6,668.2 1091.4,660.1 1091.4,651.6 1090.6,642.7 1089.1,633.5 1086.8,624.0 1083.8,614.5 1080.1,605.0 1075.8,595.6 1070.9,586.4 1065.4,577.6 1059.4,569.1 1053.0,561.2 1046.3,553.8 1039.3,547.1 1032.0,541.2 1024.7,536.1 1017.3,531.8 1010.0,528.5 1002.8,526.1 995.7,524.6 989.0,524.2 982.6,524.8 976.6,526.3 971.2,528.9" fill="url(#gGray)" stroke="none" stroke-width="0.95" stroke-linejoin="round" />
<polyline points="971.2,528.9 940.2,546.8 935.2,550.3 930.9,554.7 927.2,559.9 924.2,566.0 921.9,572.7 920.4,580.2 919.6,588.2 919.6,596.7 920.4,605.7 921.9,614.9 924.2,624.3 927.2,633.8 930.9,643.3 935.2,652.7 940.2,661.9 945.6,670.8 951.6,679.2 958.0,687.2 964.7,694.5 971.8,701.2 979.0,707.2 986.3,712.3 993.7,716.5 1001.0,719.9 1008.2,722.3 1015.3,723.7 1022.0,724.1 1028.4,723.6 1034.4,722.0 1039.8,719.5 1070.9,701.6" fill="none" stroke="#15140f" stroke-width="1.0" stroke-linejoin="round" stroke-linecap="round" />
<polygon points="919.5,592.4 919.9,584.1 921.0,576.4 923.0,569.3 925.6,562.8 928.9,557.2 933.0,552.3 937.6,548.4 942.8,545.4 948.6,543.3 954.8,542.3 961.3,542.2 968.2,543.1 975.3,545.0 982.6,547.9 990.0,551.7 997.4,556.4 1004.7,562.0 1011.8,568.3 1018.7,575.3 1025.2,583.0 1031.4,591.2 1037.2,599.9 1042.4,608.9 1047.0,618.2 1051.0,627.7 1054.4,637.2 1057.0,646.7 1059.0,656.0 1060.1,665.1 1060.5,673.8 1060.1,682.1 1059.0,689.9 1057.0,697.0 1054.4,703.4 1051.0,709.1 1047.0,713.9 1042.4,717.8 1037.2,720.8 1031.4,722.9 1025.2,724.0 1018.7,724.0 1011.8,723.1 1004.7,721.2 997.4,718.3 990.0,714.5 982.6,709.8 975.3,704.3 968.2,698.0 961.3,690.9 954.8,683.3 948.6,675.1 942.8,666.4 937.6,657.3 933.0,648.0 929.0,638.6 925.6,629.0 923.0,619.6 921.0,610.2 919.9,601.2 919.5,592.4" fill="#5a5955" stroke="#15140f" stroke-width="1.0" stroke-linejoin="round" />
<polygon points="932.3,552.9 927.5,556.3 923.2,560.6 919.5,565.8 916.6,571.8 914.3,578.5 912.8,585.8 912.1,593.7 912.1,602.1 912.8,610.9 914.3,620.0 916.6,629.3 919.5,638.7 923.2,648.1 927.5,657.4 932.3,666.4 937.7,675.2 943.6,683.5 949.9,691.3 956.6,698.6 963.5,705.2 970.6,711.1 977.9,716.1 985.1,720.3 992.4,723.6 999.5,726.0 1006.4,727.4 1013.1,727.8 1019.4,727.2 1025.3,725.7 1030.7,723.2 1039.2,718.3 1044.0,714.9 1048.3,710.5 1052.0,705.4 1054.9,699.4 1057.2,692.7 1058.7,685.3 1059.4,677.4 1059.4,669.0 1058.7,660.2 1057.2,651.1 1054.9,641.8 1052.0,632.4 1048.3,623.1 1044.0,613.8 1039.2,604.7 1033.8,596.0 1027.9,587.6 1021.6,579.8 1014.9,572.5 1008.0,565.9 1000.9,560.1 993.6,555.0 986.4,550.8 979.1,547.5 972.0,545.2 965.1,543.8 958.4,543.3 952.1,543.9 946.2,545.4 940.8,548.0" fill="url(#gGray)" stroke="#15140f" stroke-width="1.0" stroke-linejoin="round" />
<polygon points="912.0,597.9 912.3,589.7 913.5,582.1 915.4,575.0 918.0,568.7 921.3,563.1 925.2,558.3 929.8,554.5 935.0,551.5 940.6,549.5 946.7,548.4 953.2,548.3 960.0,549.3 967.0,551.1 974.2,554.0 981.5,557.7 988.8,562.4 996.0,567.8 1003.0,574.1 1009.8,581.0 1016.3,588.6 1022.4,596.7 1028.0,605.2 1033.2,614.1 1037.8,623.3 1041.7,632.6 1045.0,642.0 1047.6,651.4 1049.5,660.6 1050.7,669.6 1051.0,678.2 1050.7,686.4 1049.5,694.0 1047.6,701.0 1045.0,707.4 1041.7,712.9 1037.8,717.7 1033.2,721.6 1028.0,724.6 1022.4,726.6 1016.3,727.6 1009.8,727.7 1003.0,726.8 996.0,724.9 988.8,722.1 981.5,718.3 974.2,713.7 967.0,708.2 960.0,702.0 953.2,695.1 946.7,687.5 940.6,679.4 935.0,670.8 929.8,661.9 925.2,652.7 921.3,643.4 918.0,634.0 915.4,624.7 913.5,615.5 912.3,606.5 912.0,597.9" fill="#7a7a76" stroke="#15140f" stroke-width="1.0" stroke-linejoin="round" />
<polygon points="923.6,559.7 918.8,563.1 914.6,567.4 911.0,572.5 908.1,578.3 905.9,584.9 904.4,592.1 903.7,599.9 903.7,608.2 904.4,616.9 905.9,625.8 908.1,634.9 911.0,644.2 914.6,653.4 918.8,662.5 923.6,671.4 928.9,680.0 934.7,688.3 940.9,696.0 947.5,703.1 954.3,709.6 961.3,715.4 968.4,720.3 975.6,724.5 982.7,727.7 989.7,730.0 996.5,731.4 1003.1,731.8 1009.3,731.3 1015.1,729.8 1020.4,727.3 1029.9,721.8 1034.7,718.4 1038.9,714.2 1042.5,709.1 1045.4,703.2 1047.6,696.6 1049.1,689.4 1049.8,681.6 1049.8,673.3 1049.1,664.7 1047.6,655.7 1045.4,646.6 1042.5,637.4 1038.9,628.1 1034.7,619.0 1029.9,610.1 1024.6,601.5 1018.8,593.3 1012.6,585.6 1006.0,578.4 999.2,571.9 992.2,566.2 985.1,561.2 977.9,557.1 970.8,553.8 963.8,551.5 957.0,550.1 950.4,549.7 944.2,550.3 938.4,551.8 933.1,554.2" fill="url(#gGray)" stroke="#15140f" stroke-width="1.0" stroke-linejoin="round" />
<polygon points="903.6,604.0 904.0,596.0 905.1,588.5 906.9,581.5 909.5,575.3 912.8,569.8 916.7,565.1 921.2,561.3 926.2,558.4 931.8,556.4 937.8,555.3 944.2,555.3 950.9,556.2 957.8,558.0 964.8,560.8 972.0,564.5 979.2,569.1 986.2,574.5 993.1,580.6 999.8,587.4 1006.2,594.8 1012.2,602.8 1017.8,611.2 1022.8,620.0 1027.3,629.0 1031.2,638.2 1034.5,647.5 1037.1,656.7 1038.9,665.7 1040.0,674.5 1040.4,683.0 1040.0,691.1 1038.9,698.6 1037.1,705.5 1034.5,711.7 1031.2,717.2 1027.3,721.9 1022.8,725.7 1017.8,728.7 1012.2,730.6 1006.2,731.7 999.8,731.7 993.1,730.9 986.2,729.0 979.2,726.2 972.0,722.5 964.8,718.0 957.8,712.6 950.9,706.4 944.2,699.6 937.8,692.2 931.8,684.2 926.2,675.8 921.2,667.0 916.7,658.0 912.8,648.8 909.5,639.6 906.9,630.4 905.1,621.3 904.0,612.5 903.6,604.0" fill="#6a6964" stroke="#15140f" stroke-width="1.0" stroke-linejoin="round" />
<polygon points="854.9,602.6 850.3,605.9 846.2,610.0 842.7,615.0 839.9,620.7 837.7,627.1 836.3,634.1 835.6,641.7 835.6,649.7 836.3,658.1 837.7,666.8 839.9,675.7 842.7,684.6 846.2,693.6 850.3,702.5 854.9,711.1 860.1,719.5 865.7,727.4 871.7,734.9 878.1,741.8 884.7,748.1 891.5,753.7 898.4,758.6 905.4,762.6 912.3,765.7 919.1,768.0 925.7,769.3 932.1,769.7 938.1,769.2 943.7,767.7 948.9,765.3 1019.0,724.9 1023.6,721.6 1027.7,717.5 1031.2,712.5 1034.0,706.8 1036.2,700.4 1037.6,693.4 1038.3,685.8 1038.3,677.8 1037.6,669.4 1036.2,660.7 1034.0,651.8 1031.2,642.9 1027.7,633.9 1023.6,625.0 1019.0,616.4 1013.8,608.0 1008.2,600.1 1002.2,592.6 995.8,585.7 989.2,579.4 982.4,573.8 975.5,568.9 968.5,564.9 961.6,561.8 954.8,559.5 948.2,558.2 941.8,557.8 935.8,558.3 930.2,559.8 925.0,562.2" fill="url(#gGold)" stroke="#15140f" stroke-width="1.0" stroke-linejoin="round" />
<polygon points="835.5,645.6 835.8,637.8 836.9,630.5 838.7,623.8 841.2,617.8 844.4,612.4 848.2,607.9 852.5,604.2 857.5,601.3 862.9,599.4 868.7,598.4 874.9,598.3 881.4,599.2 888.1,601.0 895.0,603.7 901.9,607.3 908.8,611.7 915.7,616.9 922.4,622.9 928.9,629.5 935.1,636.7 940.9,644.5 946.3,652.6 951.3,661.2 955.6,669.9 959.4,678.8 962.6,687.8 965.1,696.8 966.9,705.6 968.0,714.1 968.3,722.3 968.0,730.1 966.9,737.4 965.1,744.2 962.6,750.2 959.4,755.5 955.6,760.1 951.3,763.8 946.3,766.6 940.9,768.6 935.1,769.6 928.9,769.7 922.4,768.8 915.7,767.0 908.8,764.3 901.9,760.7 895.0,756.3 888.1,751.0 881.4,745.1 874.9,738.5 868.7,731.2 862.9,723.5 857.5,715.3 852.5,706.8 848.2,698.0 844.4,689.1 841.2,680.1 838.7,671.2 836.9,662.4 835.8,653.9 835.5,645.6" fill="#5a4216" stroke="#15140f" stroke-width="1.0" stroke-linejoin="round" />
<polygon points="839.0,612.1 834.3,615.4 830.2,619.5 826.8,624.5 823.9,630.2 821.8,636.5 820.4,643.5 819.6,651.1 819.6,659.1 820.4,667.5 821.8,676.1 823.9,685.0 826.8,693.9 830.2,702.9 834.3,711.7 839.0,720.3 844.1,728.7 849.7,736.6 855.7,744.1 862.1,751.0 868.7,757.3 875.4,762.9 882.3,767.7 889.3,771.7 896.2,774.8 902.9,777.1 909.5,778.4 915.9,778.8 921.9,778.3 927.5,776.8 932.6,774.4 948.7,765.1 953.4,761.9 957.5,757.7 960.9,752.8 963.8,747.1 965.9,740.7 967.3,733.7 968.1,726.2 968.1,718.2 967.3,709.8 965.9,701.1 963.8,692.3 960.9,683.3 957.5,674.4 953.4,665.6 948.7,656.9 943.6,648.6 938.0,640.7 932.0,633.2 925.6,626.3 919.0,620.0 912.3,614.4 905.4,609.6 898.4,605.6 891.5,602.4 884.8,600.2 878.2,598.9 871.8,598.5 865.8,599.0 860.2,600.5 855.1,602.8" fill="url(#gGold)" stroke="#15140f" stroke-width="1.0" stroke-linejoin="round" />
<polygon points="819.5,655.0 819.9,647.2 821.0,640.0 822.8,633.3 825.3,627.2 828.4,621.9 832.2,617.4 836.6,613.7 841.5,610.8 846.9,608.9 852.7,607.9 858.9,607.8 865.3,608.7 872.0,610.5 878.9,613.2 885.8,616.8 892.7,621.2 899.6,626.4 906.3,632.3 912.7,639.0 918.9,646.2 924.7,653.9 930.1,662.0 935.0,670.5 939.4,679.3 943.2,688.2 946.3,697.1 948.8,706.0 950.6,714.8 951.7,723.3 952.1,731.5 951.7,739.3 950.6,746.6 948.8,753.3 946.3,759.3 943.2,764.7 939.4,769.2 935.0,772.9 930.1,775.7 924.7,777.7 918.9,778.7 912.7,778.7 906.3,777.9 899.6,776.1 892.7,773.4 885.8,769.8 878.9,765.4 872.0,760.2 865.3,754.2 858.9,747.6 852.7,740.4 846.9,732.7 841.5,724.5 836.6,716.0 832.2,707.3 828.4,698.4 825.3,689.5 822.8,680.5 821.0,671.8 819.9,663.2 819.5,655.0" fill="#8a651e" stroke="#15140f" stroke-width="1.0" stroke-linejoin="round" />
<polygon points="817.0,629.3 812.6,632.5 808.7,636.4 805.3,641.1 802.6,646.6 800.6,652.7 799.2,659.4 798.5,666.6 798.5,674.3 799.2,682.3 800.6,690.7 802.6,699.1 805.3,707.7 808.7,716.3 812.6,724.7 817.0,733.0 822.0,741.0 827.3,748.6 833.1,755.8 839.2,762.4 845.5,768.4 852.0,773.7 858.6,778.4 865.2,782.2 871.8,785.2 878.3,787.4 884.6,788.6 890.7,789.0 896.5,788.5 901.8,787.1 906.8,784.8 930.7,771.0 935.1,767.9 939.0,763.9 942.4,759.2 945.1,753.8 947.1,747.7 948.5,740.9 949.2,733.7 949.2,726.0 948.5,718.0 947.1,709.7 945.1,701.2 942.4,692.7 939.0,684.1 935.1,675.6 930.7,667.4 925.7,659.4 920.4,651.8 914.6,644.6 908.5,638.0 902.2,632.0 895.7,626.6 889.1,622.0 882.5,618.2 875.9,615.2 869.4,613.0 863.1,611.7 857.0,611.3 851.2,611.8 845.9,613.3 840.9,615.5" fill="url(#gGold)" stroke="#15140f" stroke-width="1.0" stroke-linejoin="round" />
<polygon points="798.4,670.4 798.8,663.0 799.8,656.0 801.5,649.6 803.9,643.8 806.9,638.7 810.5,634.3 814.7,630.8 819.4,628.1 824.6,626.2 830.2,625.3 836.1,625.2 842.3,626.0 848.7,627.8 855.3,630.4 861.9,633.8 868.5,638.0 875.1,643.0 881.5,648.7 887.7,655.0 893.6,661.9 899.2,669.3 904.4,677.1 909.1,685.3 913.3,693.6 916.9,702.2 919.9,710.7 922.3,719.3 924.0,727.7 925.0,735.9 925.4,743.7 925.0,751.2 924.0,758.2 922.3,764.6 919.9,770.4 916.9,775.5 913.3,779.8 909.1,783.4 904.4,786.1 899.2,787.9 893.6,788.9 887.7,788.9 881.5,788.1 875.1,786.4 868.5,783.8 861.9,780.4 855.3,776.1 848.7,771.2 842.3,765.5 836.1,759.1 830.2,752.2 824.6,744.8 819.4,737.0 814.7,728.9 810.5,720.5 806.9,712.0 803.9,703.4 801.5,694.9 799.8,686.5 798.8,678.3 798.4,670.4" fill="#5a4216" stroke="#15140f" stroke-width="1.0" stroke-linejoin="round" />
<polygon points="792.3,643.6 787.9,646.7 784.0,650.7 780.6,655.4 777.9,660.9 775.9,667.0 774.5,673.7 773.8,680.9 773.8,688.6 774.5,696.6 775.9,704.9 777.9,713.4 780.6,722.0 784.0,730.5 787.9,739.0 792.3,747.3 797.3,755.2 802.6,762.9 808.4,770.0 814.5,776.6 820.8,782.7 827.3,788.0 833.9,792.6 840.5,796.5 847.1,799.5 853.6,801.6 859.9,802.9 866.0,803.3 871.8,802.8 877.1,801.4 882.1,799.1 906.8,784.8 911.2,781.7 915.1,777.7 918.5,773.0 921.2,767.6 923.2,761.5 924.6,754.7 925.3,747.5 925.3,739.8 924.6,731.8 923.2,723.5 921.2,715.0 918.5,706.5 915.1,697.9 911.2,689.4 906.8,681.2 901.8,673.2 896.5,665.6 890.7,658.4 884.6,651.8 878.3,645.8 871.8,640.4 865.2,635.8 858.6,632.0 852.0,628.9 845.5,626.8 839.2,625.5 833.1,625.1 827.3,625.6 822.0,627.1 817.0,629.3" fill="url(#gGray)" stroke="#15140f" stroke-width="1.0" stroke-linejoin="round" />
<polygon points="773.7,684.7 774.1,677.2 775.1,670.3 776.8,663.8 779.2,658.0 782.2,653.0 785.8,648.6 790.0,645.1 794.7,642.3 799.9,640.5 805.5,639.5 811.4,639.5 817.6,640.3 824.0,642.0 830.6,644.6 837.2,648.0 843.8,652.3 850.4,657.3 856.8,663.0 863.0,669.3 868.9,676.2 874.5,683.6 879.7,691.4 884.4,699.5 888.6,707.9 892.2,716.4 895.2,725.0 897.6,733.5 899.3,741.9 900.3,750.1 900.7,758.0 900.3,765.5 899.3,772.4 897.6,778.8 895.2,784.6 892.2,789.7 888.6,794.1 884.4,797.6 879.7,800.3 874.5,802.2 868.9,803.1 863.0,803.2 856.8,802.4 850.4,800.7 843.8,798.1 837.2,794.6 830.6,790.4 824.0,785.4 817.6,779.7 811.4,773.4 805.5,766.5 799.9,759.1 794.7,751.3 790.0,743.2 785.8,734.8 782.2,726.3 779.2,717.7 776.8,709.1 775.1,700.7 774.1,692.6 773.7,684.7" fill="#6a6964" stroke="#15140f" stroke-width="1.0" stroke-linejoin="round" />
<polygon points="784.0,648.1 779.5,651.3 775.6,655.2 772.3,660.0 769.6,665.4 767.5,671.6 766.1,678.3 765.4,685.5 765.4,693.2 766.1,701.3 767.5,709.6 769.6,718.1 772.3,726.7 775.6,735.3 779.5,743.8 784.0,752.1 788.9,760.1 794.3,767.7 800.1,774.9 806.2,781.5 812.5,787.6 819.0,792.9 825.7,797.6 832.3,801.4 839.0,804.4 845.5,806.6 851.8,807.9 857.9,808.2 863.7,807.7 869.1,806.3 874.0,804.0 882.2,799.3 886.7,796.2 890.6,792.2 893.9,787.5 896.6,782.0 898.7,775.9 900.1,769.1 900.8,761.9 900.8,754.2 900.1,746.1 898.7,737.8 896.6,729.3 893.9,720.7 890.6,712.1 886.7,703.6 882.2,695.4 877.3,687.3 871.9,679.7 866.1,672.5 860.0,665.9 853.7,659.9 847.2,654.5 840.5,649.9 833.9,646.0 827.2,643.0 820.7,640.8 814.4,639.6 808.3,639.2 802.5,639.7 797.1,641.1 792.2,643.4" fill="url(#gGoldD)" stroke="#15140f" stroke-width="1.0" stroke-linejoin="round" />
<polygon points="765.3,689.3 765.7,681.8 766.7,674.8 768.5,668.4 770.9,662.6 773.9,657.5 777.5,653.1 781.7,649.6 786.4,646.9 791.6,645.0 797.2,644.0 803.1,644.0 809.3,644.8 815.8,646.5 822.3,649.1 829.0,652.6 835.7,656.8 842.2,661.8 848.7,667.5 854.9,673.9 860.8,680.8 866.4,688.2 871.6,696.0 876.3,704.2 880.5,712.6 884.1,721.2 887.1,729.8 889.5,738.3 891.3,746.7 892.3,754.9 892.7,762.8 892.3,770.3 891.3,777.3 889.5,783.7 887.1,789.5 884.1,794.7 880.5,799.0 876.3,802.6 871.6,805.3 866.4,807.1 860.8,808.1 854.9,808.2 848.7,807.3 842.2,805.6 835.7,803.0 829.0,799.6 822.3,795.3 815.8,790.3 809.3,784.6 803.1,778.3 797.2,771.4 791.6,763.9 786.4,756.1 781.7,747.9 777.5,739.5 773.9,731.0 770.9,722.4 768.5,713.8 766.7,705.4 765.7,697.2 765.3,689.3" fill="#5a4216" stroke="#15140f" stroke-width="1.0" stroke-linejoin="round" />
<polygon points="776.9,652.1 772.5,655.2 768.5,659.2 765.2,663.9 762.5,669.4 760.4,675.5 759.0,682.3 758.3,689.5 758.3,697.2 759.0,705.3 760.4,713.6 762.5,722.1 765.2,730.7 768.5,739.3 772.5,747.8 776.9,756.1 781.9,764.2 787.3,771.8 793.1,779.0 799.2,785.6 805.5,791.7 812.0,797.1 818.7,801.7 825.3,805.5 832.0,808.6 838.5,810.7 844.8,812.0 850.9,812.4 856.7,811.9 862.1,810.5 867.1,808.2 874.1,804.1 878.5,801.0 882.5,797.0 885.8,792.3 888.5,786.8 890.6,780.7 892.0,773.9 892.7,766.7 892.7,759.0 892.0,750.9 890.6,742.6 888.5,734.1 885.8,725.5 882.5,716.9 878.5,708.4 874.1,700.1 869.1,692.0 863.7,684.4 857.9,677.2 851.8,670.6 845.5,664.5 839.0,659.1 832.3,654.5 825.7,650.6 819.0,647.6 812.5,645.5 806.2,644.2 800.1,643.8 794.3,644.3 788.9,645.7 783.9,648.0" fill="url(#gGoldD)" stroke="#15140f" stroke-width="1.0" stroke-linejoin="round" />
<polygon points="758.3,693.3 758.6,685.8 759.7,678.8 761.4,672.4 763.8,666.6 766.8,661.4 770.4,657.1 774.6,653.5 779.3,650.8 784.5,648.9 790.1,648.0 796.1,647.9 802.3,648.7 808.7,650.5 815.3,653.1 822.0,656.5 828.7,660.8 835.3,665.8 841.7,671.5 847.9,677.8 853.9,684.8 859.5,692.2 864.7,700.0 869.4,708.2 873.6,716.6 877.2,725.2 880.2,733.8 882.6,742.4 884.3,750.8 885.4,759.0 885.7,766.9 885.4,774.4 884.3,781.4 882.6,787.9 880.2,793.7 877.2,798.8 873.6,803.1 869.4,806.7 864.7,809.4 859.5,811.3 853.9,812.3 847.9,812.3 841.7,811.5 835.3,809.8 828.7,807.2 822.0,803.7 815.3,799.5 808.7,794.5 802.3,788.7 796.1,782.4 790.1,775.5 784.5,768.0 779.3,760.2 774.6,752.0 770.4,743.6 766.8,735.0 763.8,726.4 761.4,717.9 759.7,709.4 758.6,701.2 758.3,693.3" fill="#5a4216" stroke="#15140f" stroke-width="1.0" stroke-linejoin="round" />
<polygon points="771.1,654.9 766.6,658.0 762.7,662.0 759.3,666.8 756.6,672.3 754.5,678.5 753.1,685.2 752.4,692.5 752.4,700.3 753.1,708.4 754.5,716.8 756.6,725.3 759.3,734.0 762.7,742.6 766.6,751.2 771.1,759.5 776.1,767.6 781.5,775.3 787.3,782.5 793.4,789.2 799.8,795.3 806.4,800.7 813.0,805.3 819.8,809.2 826.4,812.2 833.0,814.4 839.4,815.7 845.5,816.1 851.3,815.6 856.7,814.1 861.7,811.8 867.3,808.6 871.8,805.4 875.7,801.5 879.1,796.7 881.8,791.2 883.9,785.0 885.3,778.2 886.0,770.9 886.0,763.2 885.3,755.1 883.9,746.7 881.8,738.1 879.1,729.5 875.7,720.8 871.8,712.3 867.3,704.0 862.3,695.9 856.9,688.2 851.1,681.0 845.0,674.3 838.6,668.2 832.0,662.8 825.4,658.2 818.6,654.3 812.0,651.2 805.4,649.1 799.0,647.8 792.9,647.4 787.1,647.9 781.7,649.3 776.7,651.6" fill="url(#gGoldD)" stroke="#15140f" stroke-width="1.0" stroke-linejoin="round" />
<polygon points="752.3,696.3 752.7,688.8 753.7,681.8 755.5,675.3 757.9,669.4 760.9,664.3 764.6,659.9 768.8,656.3 773.5,653.6 778.7,651.7 784.4,650.8 790.3,650.7 796.6,651.5 803.1,653.3 809.7,655.9 816.4,659.3 823.1,663.6 829.7,668.7 836.2,674.4 842.5,680.8 848.4,687.8 854.1,695.2 859.3,703.1 864.0,711.3 868.2,719.8 871.9,728.4 874.9,737.1 877.3,745.7 879.1,754.2 880.1,762.4 880.5,770.3 880.1,777.9 879.1,784.9 877.3,791.4 874.9,797.2 871.9,802.4 868.2,806.8 864.0,810.4 859.3,813.1 854.1,815.0 848.4,815.9 842.5,816.0 836.2,815.2 829.7,813.4 823.1,810.8 816.4,807.3 809.7,803.1 803.1,798.0 796.6,792.3 790.3,785.9 784.4,778.9 778.7,771.5 773.5,763.6 768.8,755.4 764.6,746.9 760.9,738.3 757.9,729.6 755.5,721.0 753.7,712.5 752.7,704.3 752.3,696.3" fill="#5a4216" stroke="#15140f" stroke-width="1.0" stroke-linejoin="round" />
<polygon points="769.7,655.2 765.2,658.4 761.2,662.4 757.9,667.2 755.1,672.7 753.0,678.9 751.6,685.7 750.9,693.1 750.9,700.8 751.6,709.0 753.0,717.4 755.1,726.0 757.9,734.7 761.2,743.4 765.2,751.9 769.7,760.3 774.7,768.4 780.2,776.1 786.0,783.4 792.1,790.1 798.5,796.2 805.1,801.6 811.8,806.3 818.6,810.2 825.3,813.2 831.9,815.4 838.3,816.7 844.4,817.1 850.2,816.6 855.7,815.2 860.7,812.8 861.9,812.2 866.4,809.0 870.4,805.0 873.7,800.2 876.5,794.7 878.6,788.5 880.0,781.7 880.7,774.3 880.7,766.6 880.0,758.4 878.6,750.0 876.5,741.4 873.7,732.7 870.4,724.0 866.4,715.5 861.9,707.1 856.9,699.0 851.4,691.3 845.6,684.0 839.5,677.3 833.1,671.2 826.5,665.8 819.8,661.1 813.0,657.2 806.3,654.2 799.7,652.0 793.3,650.7 787.2,650.3 781.4,650.8 775.9,652.2 770.9,654.5" fill="url(#gGoldD)" stroke="#15140f" stroke-width="1.0" stroke-linejoin="round" />
<polygon points="750.9,696.9 751.2,689.3 752.3,682.3 754.0,675.8 756.4,669.9 759.5,664.7 763.1,660.3 767.4,656.7 772.1,654.0 777.4,652.1 783.0,651.1 789.0,651.1 795.3,651.9 801.8,653.6 808.5,656.3 815.2,659.7 821.9,664.0 828.6,669.1 835.1,674.9 841.4,681.3 847.4,688.3 853.0,695.8 858.3,703.7 863.0,711.9 867.3,720.4 870.9,729.1 874.0,737.8 876.4,746.4 878.1,754.9 879.2,763.2 879.5,771.2 879.2,778.8 878.1,785.8 876.4,792.3 874.0,798.2 870.9,803.4 867.3,807.8 863.0,811.4 858.3,814.1 853.0,816.0 847.4,817.0 841.4,817.0 835.1,816.2 828.6,814.4 821.9,811.8 815.2,808.3 808.5,804.1 801.8,799.0 795.3,793.2 789.0,786.8 783.0,779.8 777.4,772.3 772.1,764.4 767.4,756.2 763.1,747.7 759.5,739.0 756.4,730.3 754.0,721.7 752.3,713.2 751.2,704.9 750.9,696.9" fill="#3a2a0c" stroke="#15140f" stroke-width="1.0" stroke-linejoin="round" />
<polygon points="751.9,665.9 747.4,669.1 743.5,673.1 740.1,677.9 737.4,683.4 735.3,689.5 733.9,696.3 733.2,703.6 733.2,711.4 733.9,719.5 735.3,727.8 737.4,736.4 740.1,745.1 743.5,753.7 747.4,762.2 751.9,770.6 756.9,778.7 762.3,786.3 768.1,793.6 774.2,800.3 780.6,806.3 787.2,811.7 793.8,816.4 800.6,820.3 807.2,823.3 813.8,825.5 820.2,826.8 826.3,827.2 832.1,826.6 837.5,825.2 842.5,822.9 860.5,812.5 865.0,809.4 868.9,805.4 872.3,800.6 875.0,795.1 877.1,788.9 878.5,782.2 879.2,774.9 879.2,767.1 878.5,759.0 877.1,750.6 875.0,742.1 872.3,733.4 868.9,724.8 865.0,716.2 860.5,707.9 855.5,699.8 850.1,692.1 844.3,684.9 838.2,678.2 831.8,672.1 825.2,666.7 818.6,662.1 811.8,658.2 805.2,655.2 798.6,653.0 792.2,651.7 786.1,651.3 780.3,651.8 774.9,653.2 769.9,655.6" fill="url(#gGray)" stroke="#15140f" stroke-width="1.0" stroke-linejoin="round" />
<polygon points="733.1,707.4 733.5,699.9 734.5,692.9 736.3,686.4 738.7,680.5 741.7,675.4 745.4,671.0 749.6,667.4 754.3,664.7 759.5,662.8 765.2,661.8 771.1,661.8 777.4,662.6 783.9,664.4 790.5,667.0 797.2,670.4 803.9,674.7 810.5,679.7 817.0,685.5 823.3,691.9 829.2,698.8 834.9,706.3 840.1,714.2 844.8,722.4 849.0,730.9 852.7,739.5 855.7,748.1 858.1,756.8 859.9,765.2 860.9,773.5 861.3,781.4 860.9,789.0 859.9,796.0 858.1,802.5 855.7,808.3 852.7,813.5 849.0,817.9 844.8,821.4 840.1,824.2 834.9,826.0 829.2,827.0 823.3,827.1 817.0,826.2 810.5,824.5 803.9,821.9 797.2,818.4 790.5,814.2 783.9,809.1 777.4,803.4 771.1,797.0 765.2,790.0 759.5,782.6 754.3,774.7 749.6,766.5 745.4,758.0 741.7,749.4 738.7,740.7 736.3,732.1 734.5,723.6 733.5,715.4 733.1,707.4" fill="#6a6964" stroke="#15140f" stroke-width="1.0" stroke-linejoin="round" />
<polygon points="737.7,668.5 733.0,671.8 728.8,676.0 725.3,681.0 722.4,686.8 720.3,693.3 718.8,700.5 718.0,708.2 718.0,716.3 718.8,724.9 720.3,733.7 722.4,742.7 725.3,751.9 728.8,761.0 733.0,770.0 737.7,778.8 743.0,787.3 748.7,795.4 754.8,803.0 761.3,810.0 768.0,816.4 774.9,822.1 782.0,827.0 789.0,831.1 796.1,834.3 803.0,836.6 809.7,838.0 816.2,838.4 822.3,837.8 828.0,836.4 833.3,833.9 842.8,828.4 847.5,825.1 851.7,820.9 855.2,815.9 858.1,810.1 860.2,803.6 861.7,796.4 862.5,788.7 862.5,780.6 861.7,772.0 860.2,763.2 858.1,754.2 855.2,745.0 851.7,735.9 847.5,726.9 842.8,718.1 837.5,709.6 831.8,701.5 825.7,693.9 819.2,686.9 812.5,680.5 805.6,674.8 798.5,669.9 791.5,665.8 784.4,662.6 777.5,660.3 770.8,658.9 764.3,658.5 758.2,659.0 752.5,660.5 747.2,663.0" fill="url(#gGray)" stroke="#15140f" stroke-width="1.0" stroke-linejoin="round" />
<polygon points="718.0,712.2 718.3,704.2 719.4,696.8 721.3,690.0 723.8,683.8 727.0,678.4 730.9,673.8 735.3,670.0 740.3,667.1 745.8,665.2 751.7,664.1 758.0,664.1 764.6,665.0 771.5,666.8 778.4,669.5 785.5,673.2 792.6,677.7 799.5,683.0 806.4,689.1 813.0,695.8 819.3,703.1 825.2,711.0 830.7,719.3 835.7,728.0 840.1,736.9 844.0,746.0 847.2,755.1 849.7,764.2 851.6,773.1 852.7,781.8 853.0,790.2 852.7,798.1 851.6,805.6 849.7,812.4 847.2,818.5 844.0,824.0 840.1,828.6 835.7,832.4 830.7,835.3 825.2,837.2 819.3,838.2 813.0,838.3 806.4,837.4 799.5,835.6 792.6,832.8 785.5,829.2 778.4,824.7 771.5,819.4 764.6,813.3 758.0,806.6 751.7,799.2 745.8,791.4 740.3,783.1 735.3,774.4 730.9,765.5 727.0,756.4 723.8,747.3 721.3,738.2 719.4,729.3 718.3,720.6 718.0,712.2" fill="#141412" stroke="#15140f" stroke-width="1.0" stroke-linejoin="round" />
<polygon points="477.1,617.6 764.1,784.7 764.1,968.2 477.1,801.1" fill="#0d0d0c" stroke="#050505" stroke-width="0.8" stroke-linejoin="round" />
<polygon points="566.5,568.2 853.5,735.3 764.1,784.7 477.1,617.6" fill="#0f0f0d" stroke="#050505" stroke-width="0.8" stroke-linejoin="round" />
<polygon points="764.1,784.7 853.5,735.3 853.5,918.8 764.1,968.2" fill="#000000" stroke="#000" stroke-width="0.8" stroke-linejoin="round" />
<polyline points="477.1,617.6 764.1,784.7" fill="none" stroke="#000" stroke-width="1" stroke-linejoin="round" stroke-linecap="round" />
<polyline points="477.1,623.6 764.1,790.7" fill="none" stroke="#070707" stroke-width="0.8" stroke-linejoin="round" stroke-linecap="round" />
<polygon points="466.7,658.6 700.6,794.1 611.2,945.6 377.3,812.0" fill="#000000" stroke="#000" stroke-width="0.8" stroke-linejoin="round" />
<polygon points="477.5,687.0 671.5,797.5 629.5,868.5" fill="url(#gScr)" stroke="none" stroke-width="0.95" stroke-linejoin="round" />
</svg>
<div id="toolbar">
<div class="topline"></div>
<div class="bline"></div>
<div id="design"><span>DESIGN</span><i class="arr" style="left:107px;top:42px;border-left-width:4px;border-right-width:4px;border-top-width:5px"></i></div>
<div class="tab act" style="left:227px">SOLID</div>
<div class="tab" style="left:342px">SURFACE</div>
<div class="tab" style="left:481px">MESH</div>
<div class="tab" style="left:591px">SHEET METAL</div>
<div class="tab" style="left:760px">PLASTIC</div>
<div class="tab" style="left:893px">UTILITIES</div>
<div class="uline"></div>
<div class="lbl" style="left:386px">CREATE</div><i class="arr" style="left:448px;top:104px"></i>
<div class="lbl" style="left:819px">MODIFY</div><i class="arr" style="left:882px;top:104px"></i>
<div class="lbl" style="left:1083px">ASSEMBLE</div><i class="arr" style="left:1169px;top:104px"></i>
<div class="lbl" style="left:1226px">CONSTRUCT</div><i class="arr" style="left:1322px;top:104px"></i>
<div class="lbl" style="left:1374px">INSPECT</div><i class="arr" style="left:1439px;top:104px"></i>
<div class="lbl" style="left:1493px">INSERT</div><i class="arr" style="left:1549px;top:104px"></i>
<div class="lbl" style="left:1596px">SELECT</div><i class="arr" style="left:1656px;top:104px"></i>
<div class="sep" style="left:654px"></div>
<div class="sep" style="left:1058px"></div>
<div class="sep" style="left:1204px"></div>
<div class="sep" style="left:1352px"></div>
<div class="sep" style="left:1470px"></div>
<div class="sep" style="left:1574px"></div>
<svg id="icons" width="1698" height="128" viewBox="0 0 1698 128">
<g stroke="#666" stroke-width="1.4" fill="none"><path d="M211.5 43.2H245M206.5 48.5V80M211.5 84.4H232M248.6 48.5V67.5"/><path d="M223 54.2H233.5M218.3 59V70"/><path d="M238 58.5C237 67 231 73 223 74.2"/></g>
<rect x="203.9" y="40.8" width="4.4" height="4.4" fill="#555"/>
<rect x="246.8" y="40.8" width="4.4" height="4.4" fill="#555"/>
<rect x="203.9" y="82.2" width="4.4" height="4.4" fill="#555"/>
<rect x="216.1" y="52" width="4.4" height="4.4" fill="#555"/>
<rect x="235.7" y="52" width="4.4" height="4.4" fill="#555"/>
<rect x="216.1" y="71.9" width="4.4" height="4.4" fill="#555"/>
<path d="M239.8 69H245.8V76H252.8V82H245.8V89H239.8V82H232.8V76H239.8Z" fill="#22a846"/>
<polygon points="272,50.7 298.7,50.7 298.7,81.3 272,81.3" fill="#6aaee3" stroke="none" stroke-width="1" stroke-linejoin="round" />
<polygon points="272,50.7 281,41.5 307.6,41.5 298.7,50.7" fill="#8dc9f7" stroke="none" stroke-width="1" stroke-linejoin="round" />
<polygon points="298.7,50.7 307.6,41.5 307.6,72 298.7,81.3" fill="#4a94cd" stroke="none" stroke-width="1" stroke-linejoin="round" />
<polygon points="272,81.3 298.7,81.3 298.7,89 272,89" fill="#bcbcbc" stroke="none" stroke-width="1" stroke-linejoin="round" />
<polygon points="298.7,81.3 307.6,72 307.6,79.8 298.7,89" fill="#a4a4a4" stroke="none" stroke-width="1" stroke-linejoin="round" />
<path d="M312.6 80V48" stroke="#333" stroke-width="1.4"/><path d="M308.6 49.5L312.6 43L316.6 49.5Z" fill="#333"/>
<path d="M379.5 53.5C368 42.5 348 42.5 337 52" stroke="#333" stroke-width="1.3" fill="none"/><path d="M334.8 53.8L341.5 49.2L340.6 54.8Z" fill="#333"/>
<path d="M334.7 63C347 48.5 370 48.5 382 61.5L374 73.5C364 65.5 352 65.5 343.5 71Z" fill="#8dc9f7"/>
<path d="M343.5 71C352 65.5 364 65.5 374 73.5V84.5C364 77 352 77 343.5 85Z" fill="#6aaee3"/>
<path d="M334.7 63L343.5 71V85L334.7 76.5Z" fill="#4a94cd"/>
<path d="M374 73.5L382 63.5V76L374 84.5Z" fill="#f4f4f4" stroke="#444" stroke-width="1.2" stroke-linejoin="round"/>
<polygon points="399.3,48.5 437.5,48.5 437.5,88.6 399.3,88.6" fill="#dcdcdc" stroke="#6b6b6b" stroke-width="1.3" stroke-linejoin="round" />
<polygon points="399.3,48.5 409,42 446.7,42 437.5,48.5" fill="#f4f4f4" stroke="#6b6b6b" stroke-width="1.3" stroke-linejoin="round" />
<polygon points="437.5,48.5 446.7,42 446.7,80 437.5,88.6" fill="#bcbcbc" stroke="#6b6b6b" stroke-width="1.3" stroke-linejoin="round" />
<circle cx="419" cy="69" r="12" fill="#f8f8f8" stroke="#6b6b6b" stroke-width="1.3"/>
<clipPath id="hcl"><circle cx="419" cy="69" r="9.4"/></clipPath>
<circle cx="419" cy="69" r="9.4" fill="#6aaee3" stroke="#3d86be" stroke-width="0.8"/>
<circle cx="424.5" cy="63" r="7.2" fill="#f8f8f8" clip-path="url(#hcl)"/>
<path d="M476 49.5H493M468.8 57V74M476 81.2H493" stroke="#666" stroke-width="1.4"/>
<rect x="464.4" y="45.1" width="9" height="9" fill="#f8f8f8" stroke="#666" stroke-width="1.3"/>
<rect x="495" y="44.5" width="10.3" height="10.3" fill="#6aaee3"/>
<rect x="463.8" y="76" width="10.3" height="10.3" fill="#6aaee3"/>
<rect x="495" y="76" width="10.3" height="10.3" fill="#6aaee3"/>
<polygon points="528,41.5 576,41.5 563,67 541,67" fill="#8dc9f7" stroke="none" stroke-width="1" stroke-linejoin="round" />
<polygon points="528,41.5 541,67 539,80 528,73.5" fill="#4a94cd" stroke="none" stroke-width="1" stroke-linejoin="round" />
<polygon points="576,41.5 563,67 565,80 576,73.5" fill="#4a94cd" stroke="none" stroke-width="1" stroke-linejoin="round" />
<polygon points="541,67 563,67 565,80 539,80" fill="#b5dcfa" stroke="none" stroke-width="1" stroke-linejoin="round" />
<circle cx="551.8" cy="75.6" r="12.8" fill="#f3f3f3" stroke="#666" stroke-width="1.5"/>
<path d="M592.5 62Q592.5 45 610 45H618Q634 45 636.5 60V76Q636.5 81 631 84.5Q622 89.5 612 89.5H606Q592.5 89.5 592.5 76Z" fill="#a77ee2"/>
<path d="M629.5 60L637 64V77Q637 81 631 84.5L629.5 85Z" fill="#8b62cc"/>
<path d="M596 60Q597 48 610 47.5H620Q628 48 630 56Q620 52 610 53Q600 54 596 60Z" fill="#c9a2f7"/>
<path d="M594 68Q610 73 629 68M612 53V88" stroke="#8458c4" stroke-width="1.2" fill="none"/>
<rect x="596" y="57" width="31" height="29" rx="7" fill="none" stroke="#c4a3f0" stroke-width="1.2" opacity="0.8"/>
<polygon points="627.5,42.0 629.5,49.7 636.3,45.7 632.3,52.5 640.0,54.5 632.3,56.5 636.3,63.3 629.5,59.3 627.5,67.0 625.5,59.3 618.7,63.3 622.7,56.5 615.0,54.5 622.7,52.5 618.7,45.7 625.5,49.7" fill="#f7a600" stroke="#e08e00" stroke-width="0.6" stroke-linejoin="round" />
<path d="M684 48.5H675.5V88.6H684" fill="#dcdcdc" stroke="#6b6b6b" stroke-width="1.3"/>
<path d="M675.5 48.5L681.5 42H690" fill="none" stroke="#6b6b6b" stroke-width="1.3"/>
<polygon points="686,48.5 699,48.5 699,89 686,89" fill="#6aaee3" stroke="none" stroke-width="1" stroke-linejoin="round" />
<polygon points="686,48.5 694,41.5 708,41.5 699,48.5" fill="#8dc9f7" stroke="none" stroke-width="1" stroke-linejoin="round" />
<polygon points="699,48.5 708,41.5 708,80 699,89" fill="#4a94cd" stroke="none" stroke-width="1" stroke-linejoin="round" />
<path d="M703.5 65H714" stroke="#f3f3f3" stroke-width="4"/><path d="M704 65H714" stroke="#333" stroke-width="1.4"/><path d="M712.5 60.8L719 65L712.5 69.2Z" fill="#333"/>
<path d="M738.3 50.5L748.5 42H764L757 46.5Q775 52 775 71L786.3 61V80L774.8 88.6H738.3Z" fill="#dcdcdc" stroke="#6b6b6b" stroke-width="1.3" stroke-linejoin="round"/>
<path d="M774.8 71L786.3 61V80L774.8 88.6Z" fill="#bcbcbc" stroke="#6b6b6b" stroke-width="1.3" stroke-linejoin="round"/>
<path d="M738.3 50.5H750Q774.8 51 774.8 72" fill="none" stroke="#6b6b6b" stroke-width="1.3"/>
<path d="M756.5 47L765 41.5Q785 45 786.5 61.5L775.5 70.5Q774.5 52.5 756.5 47Z" fill="#6aaee3"/>
<polygon points="802.5,48.5 839,48.5 839,88.6 802.5,88.6" fill="#dcdcdc" stroke="#6b6b6b" stroke-width="1.3" stroke-linejoin="round" />
<polygon points="802.5,48.5 812.5,42 850.5,42 839,48.5" fill="#f4f4f4" stroke="#6b6b6b" stroke-width="1.3" stroke-linejoin="round" />
<polygon points="839,48.5 850.5,42 850.5,80 839,88.6" fill="#bcbcbc" stroke="#6b6b6b" stroke-width="1.3" stroke-linejoin="round" />
<polygon points="806.8,57.6 833.2,57.6 833.2,84.4 806.8,84.4" fill="#f1f1f1" stroke="none" stroke-width="1" stroke-linejoin="round" />
<polygon points="808,59.5 819,59.5 819,71.5 808,82.5" fill="#4a94cd" stroke="none" stroke-width="1" stroke-linejoin="round" />
<polygon points="808,83 819,71.8 832,71.8 832,83" fill="#8dc9f7" stroke="none" stroke-width="1" stroke-linejoin="round" />
<polygon points="866.8,66 891,66 891,89 866.8,89" fill="#6aaee3" stroke="none" stroke-width="1" stroke-linejoin="round" />
<polygon points="866.8,66 873.5,58.5 884,58.5 884,66" fill="#8dc9f7" stroke="none" stroke-width="1" stroke-linejoin="round" />
<polygon points="891,75 899,75 899,80.5 891,89" fill="#4a94cd" stroke="none" stroke-width="1" stroke-linejoin="round" />
<polygon points="883,51.5 906,51.5 906,75 883,75" fill="#6aaee3" stroke="none" stroke-width="1" stroke-linejoin="round" />
<polygon points="883,51.5 891.5,41.5 915,41.5 906,51.5" fill="#8dc9f7" stroke="none" stroke-width="1" stroke-linejoin="round" />
<polygon points="906,51.5 915,41.5 915,64.5 906,75" fill="#4a94cd" stroke="none" stroke-width="1" stroke-linejoin="round" />
<polygon points="935.3,73 968,73 968,87.6 935.3,87.6" fill="#dcdcdc" stroke="#6b6b6b" stroke-width="1.3" stroke-linejoin="round" />
<polygon points="968,73 976.6,64 976.6,78.5 968,87.6" fill="#bcbcbc" stroke="#6b6b6b" stroke-width="1.3" stroke-linejoin="round" />
<polygon points="935.3,51 968,51 968,65.5 935.3,65.5" fill="#6aaee3" stroke="none" stroke-width="1" stroke-linejoin="round" />
<polygon points="935.3,51 945,41.5 976.6,41.5 968,51" fill="#8dc9f7" stroke="none" stroke-width="1" stroke-linejoin="round" />
<polygon points="968,51 976.6,41.5 976.6,57 968,65.5" fill="#4a94cd" stroke="none" stroke-width="1" stroke-linejoin="round" />
<path d="M931.5 69.6H968.5L979.6 57.5" stroke="#3d9be9" stroke-width="1.6" fill="none"/>
<path d="M1020 50V81M1004 65.5H1036" stroke="#333" stroke-width="3"/>
<path d="M1020 42L1027 52.5H1013ZM1020 89L1027 78.5H1013ZM996.5 65.5L1007 58.5V72.5ZM1043.5 65.5L1033 58.5V72.5Z" fill="#333"/>
<polygon points="1077.3,71 1095,71 1095,88.3 1077.3,88.3" fill="#dcdcdc" stroke="#6b6b6b" stroke-width="1.2" stroke-linejoin="round" />
<polygon points="1095,71 1113,71 1113,88.3 1095,88.3" fill="#dcdcdc" stroke="#6b6b6b" stroke-width="1.2" stroke-linejoin="round" />
<polygon points="1095,71 1101.5,65.5 1119,65.5 1113,71" fill="#f4f4f4" stroke="#6b6b6b" stroke-width="1.2" stroke-linejoin="round" />
<polygon points="1113,71 1119,65.5 1119,81.5 1113,88.3" fill="#bcbcbc" stroke="#6b6b6b" stroke-width="1.2" stroke-linejoin="round" />
<polygon points="1077.3,52.5 1095,52.5 1095,71 1077.3,71" fill="#6aaee3" stroke="none" stroke-width="1" stroke-linejoin="round" />
<polygon points="1077.3,52.5 1082.5,47.5 1101,47.5 1095,52.5" fill="#8dc9f7" stroke="none" stroke-width="1" stroke-linejoin="round" />
<polygon points="1095,52.5 1101,47.5 1101,65.5 1095,71" fill="#4a94cd" stroke="none" stroke-width="1" stroke-linejoin="round" />
<polygon points="1112.5,41.5 1114.5,49.2 1121.3,45.2 1117.3,52.0 1125.0,54.0 1117.3,56.0 1121.3,62.8 1114.5,58.8 1112.5,66.5 1110.5,58.8 1103.7,62.8 1107.7,56.0 1100.0,54.0 1107.7,52.0 1103.7,45.2 1110.5,49.2" fill="#f7a600" stroke="#e08e00" stroke-width="0.6" stroke-linejoin="round" />
<path d="M1145.5 58.5L1155.5 47Q1158 44.5 1161 45Q1163.5 46 1163.5 48.5V60.5Q1162 63 1156.5 63.5V75L1147 84.5Q1145.5 85 1145.5 83Z" fill="#d4d4d4" stroke="#6b6b6b" stroke-width="1.3" stroke-linejoin="round"/>
<path d="M1155.5 47.5V62" stroke="#9a9a9a" stroke-width="1"/><ellipse cx="1160" cy="47.6" rx="2.6" ry="1.3" fill="#eee" stroke="#6b6b6b" stroke-width="0.8"/>
<path d="M1176 48.5Q1178 48 1179.5 49.5L1186.3 57V84.5Q1185.5 86 1184 85L1175.5 77Q1169 77.5 1167.5 74.5V62Q1169.5 59.5 1175.5 60Z" fill="#d4d4d4" stroke="#6b6b6b" stroke-width="1.3" stroke-linejoin="round"/>
<path d="M1175.8 60V77" stroke="#9a9a9a" stroke-width="1"/><rect x="1167.8" y="61.5" width="7.6" height="14.5" fill="#b9b9b9"/>
<path d="M1158.8 64V71M1172.2 53.5V60.5" stroke="#2f8fe0" stroke-width="1.4"/>
<polygon points="1257.5,55 1270,55 1270,87.6 1257.5,87.6" fill="#dcdcdc" stroke="#6b6b6b" stroke-width="1.3" stroke-linejoin="round" />
<path d="M1257.5 55L1271 42H1283" fill="none" stroke="#6b6b6b" stroke-width="1.3"/>
<polygon points="1271,55.5 1284,42.5 1284,74.5 1271,88" fill="#5bc283" stroke="none" stroke-width="1" stroke-linejoin="round" />
<polygon points="1289,56 1302,43 1302,73.5 1289,87" fill="#e89960" stroke="none" stroke-width="1" stroke-linejoin="round" />
<rect x="1391.8" y="68.8" width="42.2" height="8.6" fill="#f7a600"/>
<path d="M1397 69V72M1402.3 69V71M1407.6 69V72M1412.9 69V71M1418.2 69V72M1423.5 69V71M1428.8 69V72" stroke="#8a5a00" stroke-width="1"/>
<path d="M1392.6 54V66.5M1433.4 54V66.5M1396 60.2H1430" stroke="#555" stroke-width="1.2"/><path d="M1393.5 60.2L1398.5 57.7V62.7ZM1432.5 60.2L1427.5 57.7V62.7Z" fill="#555"/>
<rect x="1501.5" y="43.2" width="43.4" height="43.2" fill="#8dc9f7" stroke="#5aa3dc" stroke-width="0.8"/>
<path d="M1501.5 71C1507 62 1512 59.5 1516 62.5C1520 66 1523 74 1527 74C1530 74 1532 69.5 1536 69.5C1540 69.5 1542 74 1544.9 77V86.4H1501.5Z" fill="#3f8fcb"/>
<circle cx="1532.6" cy="55.4" r="4.3" fill="#fdf8c4"/>
<rect x="1603.5" y="37" width="57" height="57" fill="#0696d7"/>
<rect x="1608.5" y="42.5" width="41.5" height="31.5" fill="none" stroke="#8be39a" stroke-width="1.3" stroke-dasharray="5 2.6"/>
<path d="M1640 63L1640 86L1645.5 81L1649.5 89.5L1653.5 87.7L1649.5 79.3L1656.8 78.7Z" fill="#fff"/>
</svg>
</div>

<div id="browser">
<div id="bhead"><span>BROWSER</span></div>
<div class="row" style="left:60px;top:51px;width:390px;height:29.5px"></div>
<div style="position:absolute;left:97.5px;top:54.3px;width:315px;height:23.5px;background:#999"></div>
<div class="t" style="position:absolute;left:147.5px;top:58.2px;font-size:16px;line-height:18px;font-weight:bold;color:#fff;white-space:nowrap;letter-spacing:0.5px">stojan sken diapozitivu V1 v19</div>
<div class="row" style="left:87px;top:87.4px;width:200.8px;height:29px"></div>
<div class="tt" style="left:136.5px;top:93.7px">Document Settings</div>
<div class="row" style="left:87px;top:123.4px;width:164.9px;height:29px"></div>
<div class="tt" style="left:136.5px;top:129.7px">Named Views</div>
<div class="row" style="left:87px;top:159.4px;width:142.6px;height:29px"></div>
<div class="tt" style="left:174.5px;top:165.7px">Origin</div>
<div class="row" style="left:87px;top:195.4px;width:142.6px;height:29px"></div>
<div class="tt" style="left:174.5px;top:201.7px">Joints</div>
<div class="row" style="left:87px;top:231.4px;width:172.5px;height:29px"></div>
<div class="tt" style="left:174.5px;top:237.7px">Sketches</div>
<div class="row" style="left:87px;top:267.4px;width:196.3px;height:29px"></div>
<div class="tt" style="left:174.5px;top:273.7px">Construction</div>
<div class="row" style="left:87px;top:303.4px;width:239.6px;height:29px"></div>
<div class="tt" style="left:211.7px;top:309.7px">diapozitiv v3:1</div>
<div class="row" style="left:87px;top:339.4px;width:366px;height:29px"></div>
<div class="tt" style="left:211.7px;top:345.7px">Sony a6400 a Laowa macro :...</div>
<div class="row" style="left:87px;top:375.4px;width:294.1px;height:29px"></div>
<div class="tt" style="left:211.7px;top:381.7px">žárovka LED 6W v1:1</div>
<div class="row" style="left:87px;top:411.4px;width:178.2px;height:29px"></div>
<div class="tt" style="left:174.5px;top:417.7px">základna:1</div>
<div class="row" style="left:87px;top:447.4px;width:190.3px;height:29px"></div>
<div class="tt" style="left:174.5px;top:453.7px">prosvětlení:1</div>
<div class="row" style="left:87px;top:483.4px;width:252px;height:29px"></div>
<div class="tt" style="left:211.7px;top:489.7px">kolík 10-30 v1:1</div>
<svg id="tree" width="470" height="540" viewBox="0 128 470 540">
<defs>
<linearGradient id="tg" x1="0" y1="0" x2="1" y2="1"><stop offset="0" stop-color="#fdfdfd"/><stop offset="1" stop-color="#c9c9cc"/></linearGradient>
<linearGradient id="tg2" x1="0" y1="0" x2="1" y2="1"><stop offset="0.2" stop-color="#e8e8e8"/><stop offset="1" stop-color="#555"/></linearGradient>
<g id="tri"><path d="M-5.6 -9 L-5.6 9 L-3.5 9 L6 0.6 L6 -0.6 L-3.5 -9 Z" fill="url(#tg)" stroke="#333" stroke-width="1.7" stroke-linejoin="round"/></g>
<g id="eye"><path d="M-12 0 C-8 -6.6 -3 -7 0 -7 C3 -7 8 -6.6 12 0 C8 6.6 3 7 0 7 C-3 7 -8 6.6 -12 0 Z" fill="#999"/><circle r="4.7" fill="#f1f1f1"/><circle r="2.6" fill="#999"/></g>
<g id="eyeh" fill="none" stroke="#9a9a9a" stroke-width="1.2"><path d="M-11.5 0 C-8 -6 -3 -6.5 0 -6.5 C3 -6.5 8 -6 11.5 0 C8 6 3 6.5 0 6.5 C-3 6.5 -8 6 -11.5 0 Z"/><circle r="4.2"/><circle r="1.8"/><path d="M-8.5 -8 L8.5 8" stroke-width="1.3"/></g>
<g id="folder"><path d="M-12 -10 L-2.5 -10 L-1 -7.6 L12 -7.6 L12 9.8 L-12 9.8 Z" fill="#999"/><path d="M-12 -6.6 L-2 -6.6 L-0.6 -7.6" stroke="#f1f1f1" stroke-width="1" fill="none"/></g>
<g id="body"><path d="M-11 -5 L-5.5 -11 L10 -11 Q11.5 -11 11.5 -9.5 L11.5 4.5 L5 11 L-9.5 11 Q-11 11 -11 9.5 Z" fill="#fff" stroke="#333" stroke-width="1.5" stroke-linejoin="round"/><path d="M-9.8 -4.2 L4.6 -4.2 L4.6 9.8 L-9.8 9.8 Z" fill="#d9dbe0"/><path d="M5.4 -4.2 L10.5 -9.5 L10.5 4.2 L5.4 9.6 Z" fill="#ecedf0"/></g>
<g id="comp"><path d="M-11 -6.5 L-7.5 -11 L1 -11 Q2.3 -11 2.3 -9.8 L2.3 -2.6 L9.8 -2.6 Q11.5 -2.6 11.5 -1 L11.5 6 L7 11 L-9.5 11 Q-11 11 -11 9.5 Z" fill="#fff" stroke="#333" stroke-width="1.5" stroke-linejoin="round"/><path d="M-9.8 -5.4 L-1.6 -5.4 L-1.6 1 L-9.8 1 Z M-9.8 2.2 L-1.6 2.2 L-1.6 9.8 L-9.8 9.8 Z M-0.2 2.4 L6 2.4 L6 9.8 L-0.2 9.8 Z" fill="#e0e2e6"/><path d="M-1.2 -4 L-1.2 10 M-1 1.6 L2 -2.2" stroke="#333" stroke-width="1.2" fill="none"/></g>
<g id="link" fill="none" stroke="#3a3a3a" stroke-width="2.9" stroke-linecap="round" transform="rotate(-40)"><path d="M3.2 -4.1H6.9A4.1 4.1 0 0 1 6.9 4.1H1.6A4.1 4.1 0 0 1 -2.3 1.4"/><path d="M-3.2 4.1H-6.9A4.1 4.1 0 0 1 -6.9 -4.1H-1.6A4.1 4.1 0 0 1 2.3 -1.4"/></g>
<g id="gear"><path fill="#999" d="M-2.3 -12 L2.3 -12 L3 -8.6 L5.6 -7.3 L8.6 -9.2 L11 -6 L8.6 -3.4 L9.2 -0.8 L12 0.6 L11.2 4.6 L7.9 4.7 L6.2 7 L7.2 10.2 L3.4 12 L1.3 9.2 L-1.3 9.2 L-3.4 12 L-7.2 10.2 L-6.2 7 L-7.9 4.7 L-11.2 4.6 L-12 0.6 L-9.2 -0.8 L-8.6 -3.4 L-11 -6 L-8.6 -9.2 L-5.6 -7.3 L-3 -8.6 Z"/><circle r="4.2" fill="#f1f1f1"/></g>
</defs>
<path d="M21 152.7 L28.5 148.6 L28.5 156.8 Z M13.5 152.7 L21 148.6 L21 156.8 Z" fill="#333"/>
<circle cx="431.4" cy="152.6" r="6.6" fill="#333"/><rect x="427.4" y="151.7" width="8" height="1.8" fill="#f1f1f1"/>
<path d="M449.1 144.6 V160.7" stroke="#888" stroke-width="1.6"/><path d="M452.3 148 V158" stroke="#999" stroke-width="1.4"/>
<path d="M31.2 201.6 L47.4 201.6 L47.4 186 Z" fill="url(#tg2)" stroke="#333" stroke-width="1.3" stroke-linejoin="round"/>
<use href="#eye" x="76.5" y="194"/>
<use href="#comp" x="113.7" y="194"/>
<circle cx="428.3" cy="194.6" r="8.7" fill="#fafafa" stroke="#333" stroke-width="1.5"/><circle cx="428.3" cy="194.6" r="3.3" fill="#333"/>
<use href="#tri" x="67" y="230.5"/>
<use href="#gear" x="103.5" y="230"/>
<use href="#tri" x="67" y="266.5"/>
<use href="#folder" x="103.5" y="266"/>
<use href="#tri" x="67" y="302.5"/>
<use href="#eyeh" x="103.5" y="302"/>
<use href="#folder" x="141" y="302"/>
<use href="#tri" x="67" y="338.5"/>
<use href="#eyeh" x="103.5" y="338"/>
<use href="#folder" x="141" y="338"/>
<use href="#tri" x="67" y="374.5"/>
<use href="#eyeh" x="103.5" y="374"/>
<use href="#folder" x="141" y="374"/>
<use href="#tri" x="67" y="410.5"/>
<use href="#eye" x="103.5" y="410"/>
<use href="#folder" x="141" y="410"/>
<use href="#tri" x="67" y="446.5"/>
<use href="#eye" x="103.5" y="446"/>
<use href="#body" x="141" y="446"/>
<use href="#link" x="178.3" y="446.3"/>
<use href="#tri" x="67" y="482.5"/>
<use href="#eye" x="103.5" y="482"/>
<use href="#comp" x="141" y="482"/>
<use href="#link" x="178.3" y="482.3"/>
<use href="#tri" x="67" y="518.5"/>
<use href="#eye" x="103.5" y="518"/>
<use href="#body" x="141" y="518"/>
<use href="#link" x="178.3" y="518.3"/>
<use href="#tri" x="67" y="554.5"/>
<use href="#eye" x="103.5" y="554"/>
<use href="#body" x="141" y="554"/>
<g transform="translate(145.8,558.2)"><path d="M-2.6 -6.4 H2.6 V-4.6 H1.6 L2 -1.2 L4.6 1.6 V2.8 H-4.6 V1.6 L-2 -1.2 L-1.6 -4.6 H-2.6 Z" fill="#f59a23" stroke="#c8420f" stroke-width="1"/><path d="M0 3 V8" stroke="#444" stroke-width="1.2"/></g>
<use href="#tri" x="67" y="590.5"/>
<use href="#eye" x="103.5" y="590"/>
<use href="#body" x="141" y="590"/>
<use href="#tri" x="67" y="626.5"/>
<use href="#eye" x="103.5" y="626"/>
<use href="#body" x="141" y="626"/>
<use href="#link" x="178.3" y="626.3"/>
</svg>
</div>
</body>
</html>
